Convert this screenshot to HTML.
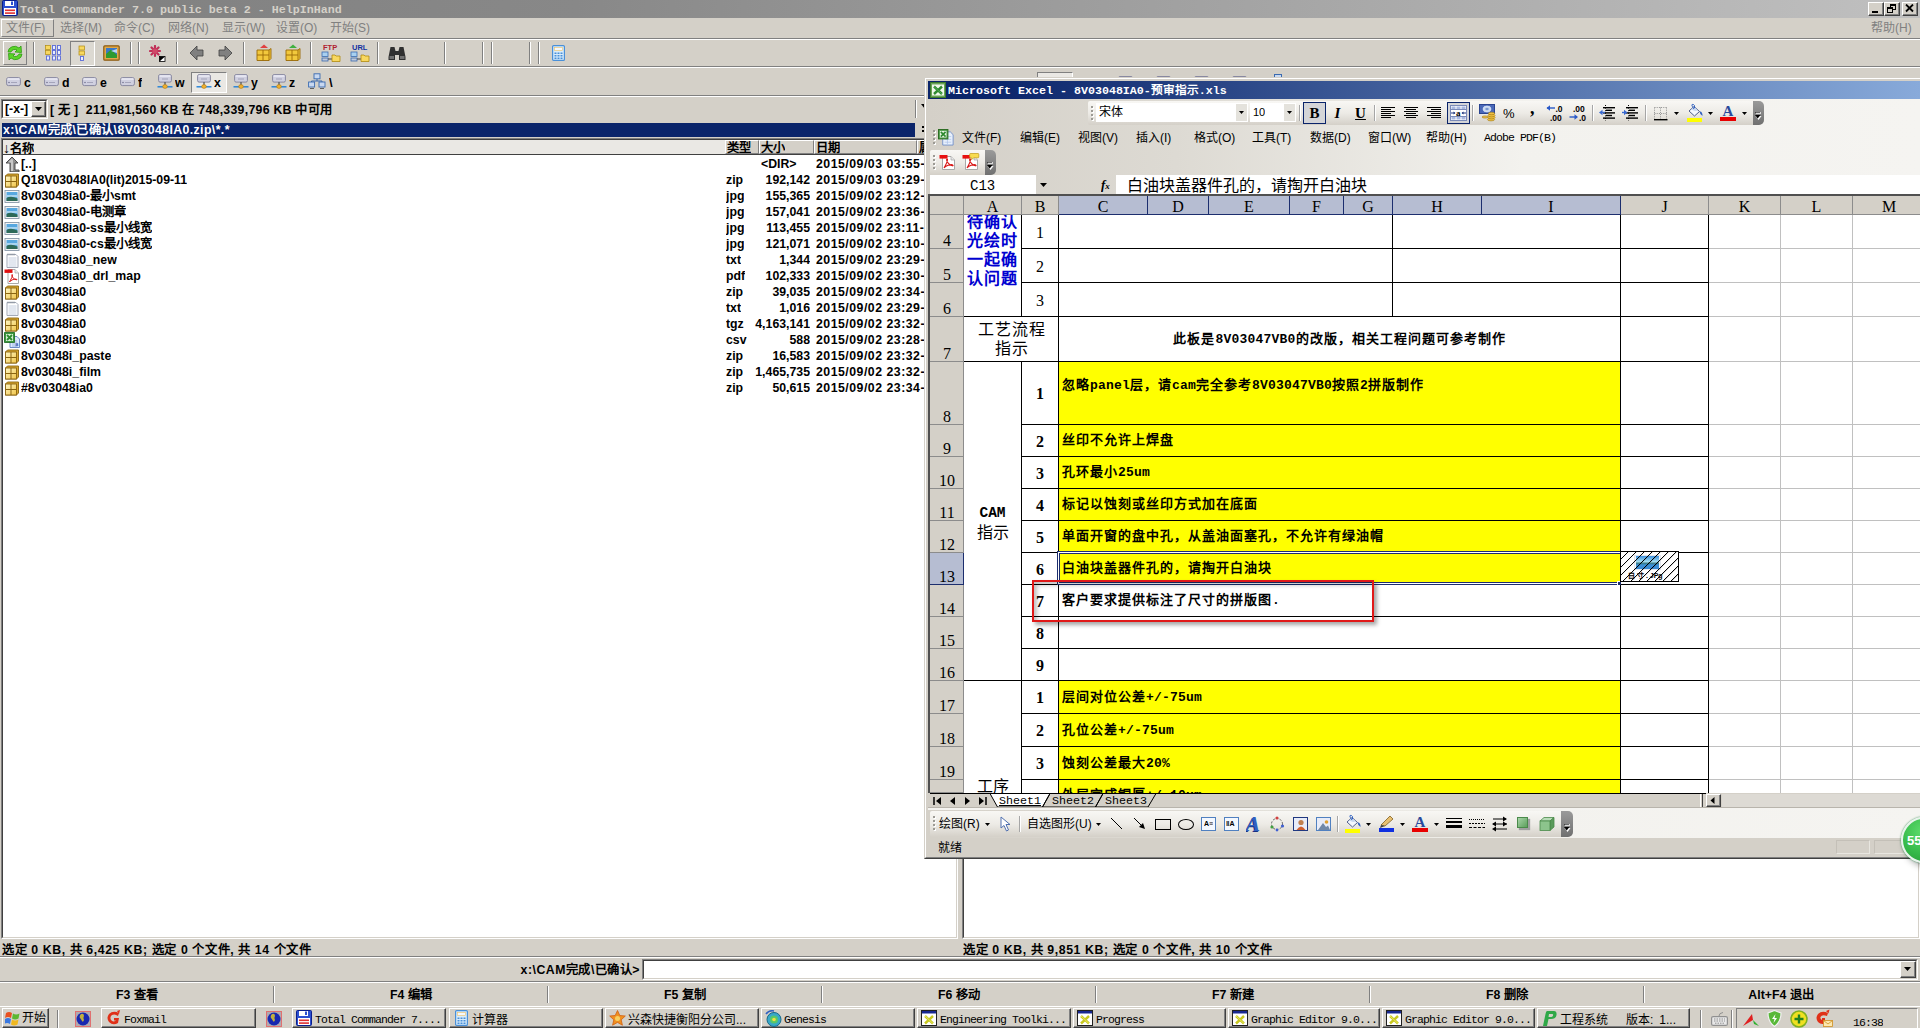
<!DOCTYPE html><html lang="zh-CN"><head><meta charset="utf-8"><title>Total Commander</title><style>
@font-face{font-family:"K";src:local("Liberation Sans Bold"),local("LiberationSans-Bold"),local("Liberation Sans");unicode-range:U+2E80-9FFF,U+FF00-FFEF;size-adjust:133.33%}
@font-face{font-family:"K";src:local("Liberation Sans Bold"),local("LiberationSans-Bold");font-weight:bold;unicode-range:U+2E80-9FFF,U+FF00-FFEF;size-adjust:133.33%}
*{box-sizing:border-box;margin:0;padding:0}
html,body{width:1920px;height:1028px;overflow:hidden}
body{background:#D4D0C8;position:relative;font-family:"K","Liberation Sans",sans-serif;font-size:12px;color:#000}
.a{position:absolute;white-space:nowrap;overflow:hidden}
.v{position:absolute;white-space:nowrap}
.ss{font-family:"K","Liberation Sans",sans-serif}
.mono{font-family:"K","Liberation Mono",monospace}
.serif{font-family:"K","Liberation Serif",serif}
.b{font-weight:bold}
.ln{position:absolute;background:#000}
.gl{position:absolute;background:#C0C0C0}
.raised{border:1px solid;border-color:#fff #808080 #808080 #fff}
.sunken{border:1px solid;border-color:#808080 #fff #fff #808080}
.tcf{font-family:"K","Liberation Sans",sans-serif;font-weight:bold;font-size:12.3px;line-height:16px}
.sep{position:absolute;width:2px;border-left:1px solid #808080;border-right:1px solid #fff}
.hl{position:absolute;height:2px;border-top:1px solid #808080;border-bottom:1px solid #fff}
.menu{position:absolute;font-size:12px;line-height:14px;white-space:nowrap}
.yl{position:absolute;background:#FFFF00}
.ct{position:absolute;white-space:nowrap;font-weight:bold;font-size:13px;letter-spacing:1px;line-height:16px}
.ct b{font-family:"Liberation Mono",monospace;letter-spacing:0.2px}
.num{position:absolute;text-align:center;font-family:"K","Liberation Serif",serif;font-size:16px;line-height:18px}
.tb{position:absolute;top:1008px;height:20px;border:1px solid;border-color:#fff #404040 #404040 #fff;box-shadow:inset -1px -1px 0 #808080;background:#D4D0C8;overflow:hidden;white-space:nowrap;font-size:12px;line-height:18px}
.tb span{position:absolute;left:22px;top:2px;font-family:"K","Liberation Mono",monospace;font-size:11.5px;letter-spacing:-0.9px}
</style></head><body>
<div class="a" style="left:0;top:0;width:1920px;height:18px;background:linear-gradient(to right,#808080 0%,#888 30%,#C0C0C0 100%)"></div>
<svg class="a" style="left:2px;top:0px" width="16" height="16" viewBox="0 0 16 16"><rect x="0.5" y="0.5" width="15" height="15" rx="1" fill="#2C4FD0" stroke="#0A1E8C"/><rect x="3" y="1" width="9" height="5" fill="#fff"/><rect x="9" y="1.5" width="2" height="3.5" fill="#2C4FD0"/><rect x="2" y="8" width="12" height="7" fill="#fff"/><rect x="3" y="9.5" width="10" height="1.6" fill="#E03030"/><rect x="3" y="12.3" width="10" height="1.6" fill="#E03030"/></svg>
<div class="a mono b" style="left:20px;top:3px;font-size:11.67px;line-height:14px;color:#D4D0C8;letter-spacing:0px">Total Commander 7.0 public beta 2 - HelpInHand</div>
<div class="a" style="left:1868px;top:2px;width:16px;height:14px;background:#D4D0C8;border:1px solid;border-color:#fff #404040 #404040 #fff;box-shadow:inset -1px -1px 0 #808080"></div><div class="ln" style="left:1872px;top:11px;width:6px;height:2px"></div><div class="a" style="left:1884px;top:2px;width:16px;height:14px;background:#D4D0C8;border:1px solid;border-color:#fff #404040 #404040 #fff;box-shadow:inset -1px -1px 0 #808080"></div><div class="a" style="left:1890px;top:4px;width:6px;height:6px;border:1px solid #000;border-top-width:2px"></div><div class="a" style="left:1887px;top:7px;width:6px;height:6px;border:1px solid #000;border-top-width:2px;background:#D4D0C8"></div><div class="a" style="left:1902px;top:2px;width:16px;height:14px;background:#D4D0C8;border:1px solid;border-color:#fff #404040 #404040 #fff;box-shadow:inset -1px -1px 0 #808080"></div><svg class="a" style="left:1905px;top:4px" width="10" height="9" viewBox="0 0 10 9"><path d="M1 0.5 L8 7.5 M8 0.5 L1 7.5" stroke="#000" stroke-width="1.8"/></svg>
<div class="a raised" style="left:1px;top:19px;width:53px;height:18px"></div>
<div class="menu" style="left:6px;top:21px;width:48px;overflow:hidden;color:#808080">文件(F)</div>
<div class="menu" style="left:60px;top:21px;width:48px;overflow:hidden;color:#808080">选择(M)</div>
<div class="menu" style="left:114px;top:21px;width:48px;overflow:hidden;color:#808080">命令(C)</div>
<div class="menu" style="left:168px;top:21px;width:48px;overflow:hidden;color:#808080">网络(N)</div>
<div class="menu" style="left:222px;top:21px;width:48px;overflow:hidden;color:#808080">显示(W)</div>
<div class="menu" style="left:276px;top:21px;width:48px;overflow:hidden;color:#808080">设置(O)</div>
<div class="menu" style="left:330px;top:21px;width:48px;overflow:hidden;color:#808080">开始(S)</div>
<div class="menu" style="left:1871px;top:21px;width:46px;overflow:hidden;color:#808080">帮助(H)</div>
<div class="hl" style="left:0;top:38px;width:1920px"></div>
<div class="hl" style="left:0;top:66px;width:1920px"></div>
<div class="hl" style="left:0;top:95px;width:1920px"></div>
<div class="sep" style="left:33px;top:42px;height:22px"></div>
<div class="sep" style="left:130px;top:42px;height:22px"></div>
<div class="sep" style="left:138px;top:42px;height:22px"></div>
<div class="sep" style="left:176px;top:42px;height:22px"></div>
<div class="sep" style="left:243px;top:42px;height:22px"></div>
<div class="sep" style="left:310px;top:42px;height:22px"></div>
<div class="sep" style="left:377px;top:42px;height:22px"></div>
<div class="sep" style="left:444px;top:42px;height:22px"></div>
<div class="sep" style="left:482px;top:42px;height:22px"></div>
<div class="sep" style="left:491px;top:42px;height:22px"></div>
<div class="sep" style="left:529px;top:42px;height:22px"></div>
<div class="sep" style="left:538px;top:42px;height:22px"></div>
<div class="a raised" style="left:3px;top:41px;width:24px;height:24px"></div>
<svg class="a" style="left:6px;top:44px" width="18" height="18" viewBox="0 0 18 18"><path d="M2 8 A6.5 6 0 0 1 13 4 L15 2 L15.5 8.5 L9 8 L11 6 A4 3.6 0 0 0 5 8 Z" fill="#5BD42A" stroke="#2E9A10" stroke-width="0.8"/><path d="M16 10 A6.5 6 0 0 1 5 14 L3 16 L2.5 9.5 L9 10 L7 12 A4 3.6 0 0 0 13 10 Z" fill="#5BD42A" stroke="#2E9A10" stroke-width="0.8"/></svg>
<svg class="a" style="left:45px;top:44px" width="18" height="18" viewBox="0 0 18 18"><g fill="#F8D860" stroke="#B08A10" stroke-width="0.7"><rect x="0.5" y="1.5" width="5" height="4"/><rect x="0.5" y="6.5" width="5" height="4"/></g><g fill="#E8EEFF" stroke="#5A6AD8" stroke-width="0.9"><rect x="1.5" y="12" width="3" height="4"/><rect x="7.5" y="1.5" width="3" height="4"/><rect x="7.5" y="6.5" width="3" height="4"/><rect x="7.5" y="12" width="3" height="4"/><rect x="12.5" y="1.5" width="3" height="4"/><rect x="12.5" y="6.5" width="3" height="4"/><rect x="12.5" y="12" width="3" height="4"/></g></svg>
<div class="a" style="left:70px;top:41px;width:25px;height:25px;border:1px solid;border-color:#808080 #fff #fff #808080;background:#DCD9D2"></div>
<svg class="a" style="left:78px;top:45px" width="9" height="18" viewBox="0 0 9 18"><g fill="#F8D860" stroke="#B08A10" stroke-width="0.7"><rect x="1" y="1" width="5.5" height="4"/><rect x="1" y="6" width="5.5" height="4"/></g><rect x="2.5" y="11.5" width="3" height="4" fill="#E8EEFF" stroke="#5A6AD8" stroke-width="0.9"/></svg>
<svg class="a" style="left:103px;top:45px" width="17" height="16" viewBox="0 0 17 16"><rect x="0.8" y="0.8" width="15.4" height="14.4" rx="1" fill="#E0A848" stroke="#8A5A10" stroke-width="1.2"/><rect x="3" y="3" width="11" height="10" fill="#3A78C8"/><path d="M3 13 L3 9 L8 4.5 L14 10 L14 13 Z" fill="#2E9A30"/><path d="M8 6 L14 4 L14 8 Z" fill="#BCD8F0"/></svg>
<svg class="a" style="left:149px;top:45px" width="18" height="18" viewBox="0 0 18 18"><g stroke="#C03058" stroke-width="2.2" stroke-linecap="round"><path d="M6 1 L6 11 M1 6 L11 6 M2.5 2.5 L9.5 9.5 M9.5 2.5 L2.5 9.5"/></g><circle cx="6" cy="6" r="2.6" fill="#D04868"/><rect x="10.5" y="11.5" width="5.5" height="5" fill="#fff" stroke="#000" stroke-width="0.8"/><path d="M10.5 16.5 L10.5 11.5 L16 11.5 Z" fill="#000"/></svg>
<svg class="a" style="left:189px;top:45px" width="16" height="16" viewBox="0 0 16 16"><path d="M1 8 L8 1 L8 5 L14 5 L14 11 L8 11 L8 15 Z" fill="#808080" stroke="#404040" stroke-width="0.8"/></svg>
<svg class="a" style="left:217px;top:45px" width="16" height="16" viewBox="0 0 16 16"><path d="M15 8 L8 1 L8 5 L2 5 L2 11 L8 11 L8 15 Z" fill="#808080" stroke="#404040" stroke-width="0.8"/></svg>
<svg class="a" style="left:255px;top:44px" width="18" height="18" viewBox="0 0 18 18"><path d="M5 4 L9 0.5 L13 4 Z" fill="#E04040"/><path d="M2 6 L14 6 L16 4.5 L16 14.5 L14 16.5 L2 16.5 Z" fill="#F2C83C" stroke="#9A6A08" stroke-width="0.9"/><path d="M2 11 L14 11 M8 6 L8 16.5 M14 6 L14 16.5" stroke="#9A6A08" stroke-width="0.9" fill="none"/></svg><svg class="a" style="left:284px;top:44px" width="18" height="18" viewBox="0 0 18 18"><path d="M5 4 L9 0.5 L13 4 Z" fill="#40B040"/><path d="M2 6 L14 6 L16 4.5 L16 14.5 L14 16.5 L2 16.5 Z" fill="#F2C83C" stroke="#9A6A08" stroke-width="0.9"/><path d="M2 11 L14 11 M8 6 L8 16.5 M14 6 L14 16.5" stroke="#9A6A08" stroke-width="0.9" fill="none"/></svg>
<svg class="a" style="left:321px;top:43px" width="20" height="20" viewBox="0 0 20 20"><text x="2" y="7" font-family="Liberation Sans" font-weight="bold" font-size="7.5" fill="#B02030">FTP</text><rect x="1" y="9" width="6" height="4.5" fill="#A8D0F0" stroke="#3A6AB0" stroke-width="0.8"/><rect x="1" y="15" width="6" height="3" fill="#C0C8D8" stroke="#3A6AB0" stroke-width="0.8"/><path d="M7 16 L12 16" stroke="#404040"/><path d="M11 12 L14 12 L15 13 L19 13 L19 18.5 L11 18.5 Z" fill="#F8D860" stroke="#B08A10" stroke-width="0.8"/></svg><svg class="a" style="left:350px;top:43px" width="20" height="20" viewBox="0 0 20 20"><text x="2" y="7" font-family="Liberation Sans" font-weight="bold" font-size="7.5" fill="#1030A0">URL</text><rect x="1" y="9" width="6" height="4.5" fill="#A8D0F0" stroke="#3A6AB0" stroke-width="0.8"/><rect x="1" y="15" width="6" height="3" fill="#C0C8D8" stroke="#3A6AB0" stroke-width="0.8"/><path d="M7 16 L12 16" stroke="#404040"/><path d="M11 12 L14 12 L15 13 L19 13 L19 18.5 L11 18.5 Z" fill="#F8D860" stroke="#B08A10" stroke-width="0.8"/></svg>
<svg class="a" style="left:388px;top:45px" width="18" height="16" viewBox="0 0 18 16"><path d="M2.5 2 L6.5 2 L7.5 6 L10.5 6 L11.5 2 L15.5 2 L17.5 12 L17.5 15 L11 15 L11 10 L7 10 L7 15 L0.5 15 L0.5 12 Z" fill="#303030"/><rect x="1.5" y="11" width="4.5" height="3" fill="#707070"/><rect x="12" y="11" width="4.5" height="3" fill="#707070"/></svg>
<svg class="a" style="left:552px;top:45px" width="13" height="16" viewBox="0 0 13 16"><rect x="0.6" y="0.6" width="11.8" height="14.8" rx="1" fill="#D8ECFC" stroke="#4A90D8" stroke-width="1.2"/><rect x="2.5" y="2.5" width="8" height="3" fill="#F4F8FC" stroke="#F0C060" stroke-width="0.6"/><g fill="#4A90D8"><rect x="2.5" y="7.5" width="2" height="1.5"/><rect x="5.5" y="7.5" width="2" height="1.5"/><rect x="8.5" y="7.5" width="2" height="1.5"/><rect x="2.5" y="10" width="2" height="1.5"/><rect x="5.5" y="10" width="2" height="1.5"/><rect x="8.5" y="10" width="2" height="1.5"/><rect x="2.5" y="12.5" width="2" height="1.5"/><rect x="5.5" y="12.5" width="2" height="1.5"/><rect x="8.5" y="12.5" width="2" height="1.5"/></g></svg>
<svg class="a" style="left:6px;top:77px" width="15" height="10" viewBox="0 0 15 10"><rect x="0.6" y="0.6" width="13.8" height="8" rx="1.8" fill="#D0D0E0" stroke="#8888A0" stroke-width="1"/><path d="M1.5 2 L13.5 2" stroke="#F4F4FC" stroke-width="1.2"/><path d="M5 5.5 L11 5.5" stroke="#9898B0" stroke-width="0.8"/><circle cx="3" cy="5.5" r="0.7" fill="#606080"/></svg><div class="a tcf" style="left:24px;top:75px">c</div>
<svg class="a" style="left:44px;top:77px" width="15" height="10" viewBox="0 0 15 10"><rect x="0.6" y="0.6" width="13.8" height="8" rx="1.8" fill="#D0D0E0" stroke="#8888A0" stroke-width="1"/><path d="M1.5 2 L13.5 2" stroke="#F4F4FC" stroke-width="1.2"/><path d="M5 5.5 L11 5.5" stroke="#9898B0" stroke-width="0.8"/><circle cx="3" cy="5.5" r="0.7" fill="#606080"/></svg><div class="a tcf" style="left:62px;top:75px">d</div>
<svg class="a" style="left:82px;top:77px" width="15" height="10" viewBox="0 0 15 10"><rect x="0.6" y="0.6" width="13.8" height="8" rx="1.8" fill="#D0D0E0" stroke="#8888A0" stroke-width="1"/><path d="M1.5 2 L13.5 2" stroke="#F4F4FC" stroke-width="1.2"/><path d="M5 5.5 L11 5.5" stroke="#9898B0" stroke-width="0.8"/><circle cx="3" cy="5.5" r="0.7" fill="#606080"/></svg><div class="a tcf" style="left:100px;top:75px">e</div>
<svg class="a" style="left:120px;top:77px" width="15" height="10" viewBox="0 0 15 10"><rect x="0.6" y="0.6" width="13.8" height="8" rx="1.8" fill="#D0D0E0" stroke="#8888A0" stroke-width="1"/><path d="M1.5 2 L13.5 2" stroke="#F4F4FC" stroke-width="1.2"/><path d="M5 5.5 L11 5.5" stroke="#9898B0" stroke-width="0.8"/><circle cx="3" cy="5.5" r="0.7" fill="#606080"/></svg><div class="a tcf" style="left:138px;top:75px">f</div>
<div class="a" style="left:191px;top:72px;width:36px;height:21px;border:1px solid;border-color:#808080 #fff #fff #808080;background:#EAE8E4"></div>
<svg class="a" style="left:157px;top:74px" width="16" height="16" viewBox="0 0 16 16"><rect x="1.6" y="0.6" width="12.8" height="7.5" rx="1.5" fill="#D0D0E0" stroke="#8888A0" stroke-width="1"/><path d="M2.5 2 L13.5 2" stroke="#F4F4FC" stroke-width="1.2"/><path d="M5 5 L11 5" stroke="#9898B0" stroke-width="0.8"/><path d="M8 8 L8 12" stroke="#606060" stroke-width="1.4"/><path d="M0.5 12.8 L15.5 12.8" stroke="#2080D8" stroke-width="1.4"/><ellipse cx="8" cy="12.5" rx="2.3" ry="1.9" fill="#F0B030" stroke="#B07810" stroke-width="0.6"/></svg><div class="a tcf" style="left:175px;top:75px">w</div>
<svg class="a" style="left:196px;top:74px" width="16" height="16" viewBox="0 0 16 16"><rect x="1.6" y="0.6" width="12.8" height="7.5" rx="1.5" fill="#D0D0E0" stroke="#8888A0" stroke-width="1"/><path d="M2.5 2 L13.5 2" stroke="#F4F4FC" stroke-width="1.2"/><path d="M5 5 L11 5" stroke="#9898B0" stroke-width="0.8"/><path d="M8 8 L8 12" stroke="#606060" stroke-width="1.4"/><path d="M0.5 12.8 L15.5 12.8" stroke="#2080D8" stroke-width="1.4"/><ellipse cx="8" cy="12.5" rx="2.3" ry="1.9" fill="#F0B030" stroke="#B07810" stroke-width="0.6"/></svg><div class="a tcf" style="left:214px;top:75px">x</div>
<svg class="a" style="left:233px;top:74px" width="16" height="16" viewBox="0 0 16 16"><rect x="1.6" y="0.6" width="12.8" height="7.5" rx="1.5" fill="#D0D0E0" stroke="#8888A0" stroke-width="1"/><path d="M2.5 2 L13.5 2" stroke="#F4F4FC" stroke-width="1.2"/><path d="M5 5 L11 5" stroke="#9898B0" stroke-width="0.8"/><path d="M8 8 L8 12" stroke="#606060" stroke-width="1.4"/><path d="M0.5 12.8 L15.5 12.8" stroke="#2080D8" stroke-width="1.4"/><ellipse cx="8" cy="12.5" rx="2.3" ry="1.9" fill="#F0B030" stroke="#B07810" stroke-width="0.6"/></svg><div class="a tcf" style="left:251px;top:75px">y</div>
<svg class="a" style="left:271px;top:74px" width="16" height="16" viewBox="0 0 16 16"><rect x="1.6" y="0.6" width="12.8" height="7.5" rx="1.5" fill="#D0D0E0" stroke="#8888A0" stroke-width="1"/><path d="M2.5 2 L13.5 2" stroke="#F4F4FC" stroke-width="1.2"/><path d="M5 5 L11 5" stroke="#9898B0" stroke-width="0.8"/><path d="M8 8 L8 12" stroke="#606060" stroke-width="1.4"/><path d="M0.5 12.8 L15.5 12.8" stroke="#2080D8" stroke-width="1.4"/><ellipse cx="8" cy="12.5" rx="2.3" ry="1.9" fill="#F0B030" stroke="#B07810" stroke-width="0.6"/></svg><div class="a tcf" style="left:289px;top:75px">z</div>
<svg class="a" style="left:308px;top:73px" width="18" height="17" viewBox="0 0 18 17"><g fill="#C8D8F0" stroke="#3A6AB0" stroke-width="0.9"><rect x="6" y="0.8" width="6" height="5"/><rect x="0.6" y="9" width="6" height="5"/><rect x="11" y="9" width="6" height="5"/></g><path d="M9 6 L9 8 M3.5 8 L14 8 M3.5 8 L3.5 9 M14 8 L14 9" stroke="#3A6AB0" fill="none"/><path d="M2 15.5 L6 15.5 M12 15.5 L16 15.5" stroke="#606060"/></svg>
<div class="a tcf" style="left:329px;top:75px;font-size:13px">\</div>
<div class="a" style="left:1px;top:99px;width:47px;height:20px;border:1px solid;border-color:#808080 #fff #fff #808080;background:#fff"><div class="a" style="left:0;top:0;width:45px;height:18px;border:1px solid;border-color:#404040 #D4D0C8 #D4D0C8 #404040"></div></div>
<div class="a tcf" style="left:5px;top:101px">[-x-]</div>
<div class="a" style="left:31px;top:101px;width:15px;height:16px;background:#D4D0C8;border:1px solid;border-color:#fff #404040 #404040 #fff;box-shadow:inset -1px -1px 0 #808080"></div>
<svg class="a" style="left:35px;top:107px" width="7" height="4" viewBox="0 0 7 4"><path d="M0 0 L7 0 L3.5 4 Z" fill="#000"/></svg>
<div class="a tcf" style="left:50px;top:102px;letter-spacing:0.28px">[ 无 ]&nbsp;&nbsp;211,981,560 KB 在 748,339,796 KB 中可用</div>
<div class="a" style="left:2px;top:123px;width:913px;height:14px;background:#0A246A"></div>
<div class="sep" style="left:915px;top:100px;height:18px"></div>
<svg class="a" style="left:921px;top:104px" width="4" height="5" viewBox="0 0 4 5"><path d="M0 0 L4 0 L4 5 Z" fill="#000"/></svg>
<div class="a" style="left:922px;top:126px;width:2px;height:2px;background:#000"></div><div class="a" style="left:922px;top:130px;width:2px;height:2px;background:#000"></div>
<div class="a tcf" style="left:3px;top:123px;height:14px;line-height:14px;color:#fff;letter-spacing:0.4px">x:\CAM完成\已确认\8V03048IA0.zip\*.*</div>
<div class="a" style="left:1px;top:138px;width:957px;height:801px;border:1px solid;border-color:#808080 #fff #fff #808080;background:#fff"><div class="a" style="left:0;top:0;width:955px;height:799px;border:1px solid;border-color:#404040 #D4D0C8 #D4D0C8 #404040"></div></div>
<div class="a" style="left:3px;top:140px;width:955px;height:15px;background:#EAE8E4;border-bottom:1px solid #404040"></div>
<div class="a" style="left:725px;top:140px;width:34px;height:14px;background:#D4D0C8;border:1px solid;border-color:#fff #808080 #808080 #fff"></div>
<div class="a tcf" style="left:727px;top:140px">类型</div>
<div class="a" style="left:759px;top:140px;width:55px;height:14px;background:#D4D0C8;border:1px solid;border-color:#fff #808080 #808080 #fff"></div>
<div class="a tcf" style="left:761px;top:140px">大小</div>
<div class="a" style="left:814px;top:140px;width:103px;height:14px;background:#D4D0C8;border:1px solid;border-color:#fff #808080 #808080 #fff"></div>
<div class="a tcf" style="left:816px;top:140px">日期</div>
<div class="a" style="left:917px;top:140px;width:60px;height:14px;background:#D4D0C8;border:1px solid;border-color:#fff #808080 #808080 #fff"></div>
<div class="a tcf" style="left:919px;top:140px">属性</div>
<div class="a tcf" style="left:3px;top:141px"><span style="font-size:14px;line-height:14px">↓</span>名称</div>
<svg class="a" style="left:4px;top:156px" width="16" height="16" viewBox="0 0 16 16"><path d="M8 1 L14 7 L11 7 L11 14 L15 14 L15 16 L6 16 L6 7 L2 7 Z" fill="#909090" stroke="#404040" stroke-width="0.9"/><path d="M8 2.5 L4 6.5 L7 6.5 L7 15 L9 15 L9 4 Z" fill="#C8C8C8"/></svg>
<div class="a tcf" style="left:21px;top:156px">[..]</div>
<div class="a tcf" style="left:761px;top:156px">&lt;DIR&gt;</div>
<div class="a tcf" style="left:816px;top:156px;width:108px;letter-spacing:0.5px">2015/09/03 03:55-</div>
<svg class="a" style="left:4px;top:172px" width="16" height="16" viewBox="0 0 16 16"><defs><linearGradient id="zg" x1="0" y1="0" x2="1" y2="1"><stop offset="0" stop-color="#FFF8C8"/><stop offset="1" stop-color="#F0C448"/></linearGradient></defs><path d="M1.5 4 L3.5 2 L14.5 2 L14.5 13 L12.5 15 L1.5 15 Z" fill="#D8A830" stroke="#8A6410" stroke-width="0.9"/><rect x="1.5" y="4" width="11" height="11" fill="url(#zg)" stroke="#8A6410" stroke-width="0.9"/><path d="M1.5 9.5 L12.5 9.5 M7 4 L7 15" stroke="#8A6410" stroke-width="1" fill="none"/></svg>
<div class="a tcf" style="left:21px;top:172px">Q18V03048IA0(lit)2015-09-11</div>
<div class="a tcf" style="left:726px;top:172px">zip</div>
<div class="a tcf" style="left:740px;top:172px;width:70px;text-align:right">192,142</div>
<div class="a tcf" style="left:816px;top:172px;width:108px;letter-spacing:0.5px">2015/09/03 03:29-</div>
<svg class="a" style="left:4px;top:188px" width="16" height="16" viewBox="0 0 16 16"><rect x="1" y="2.5" width="14" height="12" fill="#F4F4F4" stroke="#8898A8" stroke-width="0.9"/><rect x="2.5" y="4" width="11" height="9" fill="#58A8E0"/><path d="M2.5 7 L13.5 7 L13.5 9 L2.5 9 Z" fill="#A8D4F0"/><path d="M2.5 13 L2.5 10 Q7 7.5 13.5 10.5 L13.5 13 Z" fill="#2E6A58"/></svg>
<div class="a tcf" style="left:21px;top:188px">8v03048ia0-最小smt</div>
<div class="a tcf" style="left:726px;top:188px">jpg</div>
<div class="a tcf" style="left:740px;top:188px;width:70px;text-align:right">155,365</div>
<div class="a tcf" style="left:816px;top:188px;width:108px;letter-spacing:0.5px">2015/09/02 23:12-</div>
<svg class="a" style="left:4px;top:204px" width="16" height="16" viewBox="0 0 16 16"><rect x="1" y="2.5" width="14" height="12" fill="#F4F4F4" stroke="#8898A8" stroke-width="0.9"/><rect x="2.5" y="4" width="11" height="9" fill="#58A8E0"/><path d="M2.5 7 L13.5 7 L13.5 9 L2.5 9 Z" fill="#A8D4F0"/><path d="M2.5 13 L2.5 10 Q7 7.5 13.5 10.5 L13.5 13 Z" fill="#2E6A58"/></svg>
<div class="a tcf" style="left:21px;top:204px">8v03048ia0-电测章</div>
<div class="a tcf" style="left:726px;top:204px">jpg</div>
<div class="a tcf" style="left:740px;top:204px;width:70px;text-align:right">157,041</div>
<div class="a tcf" style="left:816px;top:204px;width:108px;letter-spacing:0.5px">2015/09/02 23:36-</div>
<svg class="a" style="left:4px;top:220px" width="16" height="16" viewBox="0 0 16 16"><rect x="1" y="2.5" width="14" height="12" fill="#F4F4F4" stroke="#8898A8" stroke-width="0.9"/><rect x="2.5" y="4" width="11" height="9" fill="#58A8E0"/><path d="M2.5 7 L13.5 7 L13.5 9 L2.5 9 Z" fill="#A8D4F0"/><path d="M2.5 13 L2.5 10 Q7 7.5 13.5 10.5 L13.5 13 Z" fill="#2E6A58"/></svg>
<div class="a tcf" style="left:21px;top:220px">8v03048ia0-ss最小线宽</div>
<div class="a tcf" style="left:726px;top:220px">jpg</div>
<div class="a tcf" style="left:740px;top:220px;width:70px;text-align:right">113,455</div>
<div class="a tcf" style="left:816px;top:220px;width:108px;letter-spacing:0.5px">2015/09/02 23:11-</div>
<svg class="a" style="left:4px;top:236px" width="16" height="16" viewBox="0 0 16 16"><rect x="1" y="2.5" width="14" height="12" fill="#F4F4F4" stroke="#8898A8" stroke-width="0.9"/><rect x="2.5" y="4" width="11" height="9" fill="#58A8E0"/><path d="M2.5 7 L13.5 7 L13.5 9 L2.5 9 Z" fill="#A8D4F0"/><path d="M2.5 13 L2.5 10 Q7 7.5 13.5 10.5 L13.5 13 Z" fill="#2E6A58"/></svg>
<div class="a tcf" style="left:21px;top:236px">8v03048ia0-cs最小线宽</div>
<div class="a tcf" style="left:726px;top:236px">jpg</div>
<div class="a tcf" style="left:740px;top:236px;width:70px;text-align:right">121,071</div>
<div class="a tcf" style="left:816px;top:236px;width:108px;letter-spacing:0.5px">2015/09/02 23:10-</div>
<svg class="a" style="left:4px;top:252px" width="16" height="16" viewBox="0 0 16 16"><path d="M3 2.5 L12 2.5 L14 4.5 L14 15.5 L3 15.5 Z" fill="#fff" stroke="#98A0B0" stroke-width="0.9"/><path d="M4 1.5 L4 3.5 M6 1.5 L6 3.5 M8 1.5 L8 3.5 M10 1.5 L10 3.5" stroke="#808890" stroke-width="0.8"/><path d="M4.5 6 L12.5 6 M4.5 8 L12.5 8 M4.5 10 L12.5 10 M4.5 12 L12.5 12 M4.5 14 L12.5 14" stroke="#B8C4D8" stroke-width="0.8"/></svg>
<div class="a tcf" style="left:21px;top:252px">8v03048ia0_new</div>
<div class="a tcf" style="left:726px;top:252px">txt</div>
<div class="a tcf" style="left:740px;top:252px;width:70px;text-align:right">1,344</div>
<div class="a tcf" style="left:816px;top:252px;width:108px;letter-spacing:0.5px">2015/09/02 23:29-</div>
<svg class="a" style="left:4px;top:268px" width="16" height="16" viewBox="0 0 16 16"><path d="M4 1.5 L11 1.5 L14.5 5 L14.5 15.5 L4 15.5 Z" fill="#fff" stroke="#A0A0A0" stroke-width="0.9"/><path d="M11 1.5 L11 5 L14.5 5" fill="#E8E8E8" stroke="#A0A0A0" stroke-width="0.7"/><rect x="0.5" y="1.5" width="8" height="3.4" fill="#E01010"/><path d="M5.5 14 Q8.5 9 8.5 6.8 Q8.2 6 7.8 6.9 Q7.8 9 10.5 11.2 Q13.5 12.5 13 11.5 Q12 10.5 9 11.5 Q6.5 12.5 5.5 14 Z" fill="none" stroke="#D81818" stroke-width="1"/></svg>
<div class="a tcf" style="left:21px;top:268px">8v03048ia0_drl_map</div>
<div class="a tcf" style="left:726px;top:268px">pdf</div>
<div class="a tcf" style="left:740px;top:268px;width:70px;text-align:right">102,333</div>
<div class="a tcf" style="left:816px;top:268px;width:108px;letter-spacing:0.5px">2015/09/02 23:30-</div>
<svg class="a" style="left:4px;top:284px" width="16" height="16" viewBox="0 0 16 16"><defs><linearGradient id="zg" x1="0" y1="0" x2="1" y2="1"><stop offset="0" stop-color="#FFF8C8"/><stop offset="1" stop-color="#F0C448"/></linearGradient></defs><path d="M1.5 4 L3.5 2 L14.5 2 L14.5 13 L12.5 15 L1.5 15 Z" fill="#D8A830" stroke="#8A6410" stroke-width="0.9"/><rect x="1.5" y="4" width="11" height="11" fill="url(#zg)" stroke="#8A6410" stroke-width="0.9"/><path d="M1.5 9.5 L12.5 9.5 M7 4 L7 15" stroke="#8A6410" stroke-width="1" fill="none"/></svg>
<div class="a tcf" style="left:21px;top:284px">8v03048ia0</div>
<div class="a tcf" style="left:726px;top:284px">zip</div>
<div class="a tcf" style="left:740px;top:284px;width:70px;text-align:right">39,035</div>
<div class="a tcf" style="left:816px;top:284px;width:108px;letter-spacing:0.5px">2015/09/02 23:34-</div>
<svg class="a" style="left:4px;top:300px" width="16" height="16" viewBox="0 0 16 16"><path d="M3 2.5 L12 2.5 L14 4.5 L14 15.5 L3 15.5 Z" fill="#fff" stroke="#98A0B0" stroke-width="0.9"/><path d="M4 1.5 L4 3.5 M6 1.5 L6 3.5 M8 1.5 L8 3.5 M10 1.5 L10 3.5" stroke="#808890" stroke-width="0.8"/><path d="M4.5 6 L12.5 6 M4.5 8 L12.5 8 M4.5 10 L12.5 10 M4.5 12 L12.5 12 M4.5 14 L12.5 14" stroke="#B8C4D8" stroke-width="0.8"/></svg>
<div class="a tcf" style="left:21px;top:300px">8v03048ia0</div>
<div class="a tcf" style="left:726px;top:300px">txt</div>
<div class="a tcf" style="left:740px;top:300px;width:70px;text-align:right">1,016</div>
<div class="a tcf" style="left:816px;top:300px;width:108px;letter-spacing:0.5px">2015/09/02 23:29-</div>
<svg class="a" style="left:4px;top:316px" width="16" height="16" viewBox="0 0 16 16"><defs><linearGradient id="zg" x1="0" y1="0" x2="1" y2="1"><stop offset="0" stop-color="#FFF8C8"/><stop offset="1" stop-color="#F0C448"/></linearGradient></defs><path d="M1.5 4 L3.5 2 L14.5 2 L14.5 13 L12.5 15 L1.5 15 Z" fill="#D8A830" stroke="#8A6410" stroke-width="0.9"/><rect x="1.5" y="4" width="11" height="11" fill="url(#zg)" stroke="#8A6410" stroke-width="0.9"/><path d="M1.5 9.5 L12.5 9.5 M7 4 L7 15" stroke="#8A6410" stroke-width="1" fill="none"/></svg>
<div class="a tcf" style="left:21px;top:316px">8v03048ia0</div>
<div class="a tcf" style="left:726px;top:316px">tgz</div>
<div class="a tcf" style="left:740px;top:316px;width:70px;text-align:right">4,163,141</div>
<div class="a tcf" style="left:816px;top:316px;width:108px;letter-spacing:0.5px">2015/09/02 23:32-</div>
<svg class="a" style="left:4px;top:332px" width="16" height="16" viewBox="0 0 16 16"><path d="M6 4.5 L13 4.5 L15.5 7 L15.5 15.5 L6 15.5 Z" fill="#DCE8FC" stroke="#6080C0" stroke-width="0.9"/><path d="M8 12 L14 12 M8 14 L14 14 M12 8 L12 15" stroke="#88A8E0" stroke-width="0.7"/><text x="11.5" y="14" font-family="Liberation Sans" font-size="5" fill="#2040A0">a</text><rect x="0.6" y="0.6" width="9.8" height="9.8" fill="#3E9A40" stroke="#1E6A20" stroke-width="0.9"/><rect x="2" y="2" width="7" height="7" fill="#D8F0D4"/><path d="M3 3 L8 8 M8 3 L3 8" stroke="#2E8A30" stroke-width="1.8"/></svg>
<div class="a tcf" style="left:21px;top:332px">8v03048ia0</div>
<div class="a tcf" style="left:726px;top:332px">csv</div>
<div class="a tcf" style="left:740px;top:332px;width:70px;text-align:right">588</div>
<div class="a tcf" style="left:816px;top:332px;width:108px;letter-spacing:0.5px">2015/09/02 23:28-</div>
<svg class="a" style="left:4px;top:348px" width="16" height="16" viewBox="0 0 16 16"><defs><linearGradient id="zg" x1="0" y1="0" x2="1" y2="1"><stop offset="0" stop-color="#FFF8C8"/><stop offset="1" stop-color="#F0C448"/></linearGradient></defs><path d="M1.5 4 L3.5 2 L14.5 2 L14.5 13 L12.5 15 L1.5 15 Z" fill="#D8A830" stroke="#8A6410" stroke-width="0.9"/><rect x="1.5" y="4" width="11" height="11" fill="url(#zg)" stroke="#8A6410" stroke-width="0.9"/><path d="M1.5 9.5 L12.5 9.5 M7 4 L7 15" stroke="#8A6410" stroke-width="1" fill="none"/></svg>
<div class="a tcf" style="left:21px;top:348px">8v03048i_paste</div>
<div class="a tcf" style="left:726px;top:348px">zip</div>
<div class="a tcf" style="left:740px;top:348px;width:70px;text-align:right">16,583</div>
<div class="a tcf" style="left:816px;top:348px;width:108px;letter-spacing:0.5px">2015/09/02 23:32-</div>
<svg class="a" style="left:4px;top:364px" width="16" height="16" viewBox="0 0 16 16"><defs><linearGradient id="zg" x1="0" y1="0" x2="1" y2="1"><stop offset="0" stop-color="#FFF8C8"/><stop offset="1" stop-color="#F0C448"/></linearGradient></defs><path d="M1.5 4 L3.5 2 L14.5 2 L14.5 13 L12.5 15 L1.5 15 Z" fill="#D8A830" stroke="#8A6410" stroke-width="0.9"/><rect x="1.5" y="4" width="11" height="11" fill="url(#zg)" stroke="#8A6410" stroke-width="0.9"/><path d="M1.5 9.5 L12.5 9.5 M7 4 L7 15" stroke="#8A6410" stroke-width="1" fill="none"/></svg>
<div class="a tcf" style="left:21px;top:364px">8v03048i_film</div>
<div class="a tcf" style="left:726px;top:364px">zip</div>
<div class="a tcf" style="left:740px;top:364px;width:70px;text-align:right">1,465,735</div>
<div class="a tcf" style="left:816px;top:364px;width:108px;letter-spacing:0.5px">2015/09/02 23:32-</div>
<svg class="a" style="left:4px;top:380px" width="16" height="16" viewBox="0 0 16 16"><defs><linearGradient id="zg" x1="0" y1="0" x2="1" y2="1"><stop offset="0" stop-color="#FFF8C8"/><stop offset="1" stop-color="#F0C448"/></linearGradient></defs><path d="M1.5 4 L3.5 2 L14.5 2 L14.5 13 L12.5 15 L1.5 15 Z" fill="#D8A830" stroke="#8A6410" stroke-width="0.9"/><rect x="1.5" y="4" width="11" height="11" fill="url(#zg)" stroke="#8A6410" stroke-width="0.9"/><path d="M1.5 9.5 L12.5 9.5 M7 4 L7 15" stroke="#8A6410" stroke-width="1" fill="none"/></svg>
<div class="a tcf" style="left:21px;top:380px">#8v03048ia0</div>
<div class="a tcf" style="left:726px;top:380px">zip</div>
<div class="a tcf" style="left:740px;top:380px;width:70px;text-align:right">50,615</div>
<div class="a tcf" style="left:816px;top:380px;width:108px;letter-spacing:0.5px">2015/09/02 23:34-</div>
<div class="a" style="left:962px;top:138px;width:958px;height:801px;border:1px solid;border-color:#808080 #fff #fff #808080;background:#fff"><div class="a" style="left:0;top:0;width:956px;height:799px;border:1px solid;border-color:#404040 #D4D0C8 #D4D0C8 #404040"></div></div>
<div class="a tcf" style="left:2px;top:942px;letter-spacing:0.6px">选定 0 KB, 共 6,425 KB; 选定 0 个文件, 共 14 个文件</div>
<div class="a tcf" style="left:963px;top:942px;letter-spacing:0.6px">选定 0 KB, 共 9,851 KB; 选定 0 个文件, 共 10 个文件</div>
<div class="hl" style="left:0;top:956px;width:1920px"></div>
<div class="a tcf" style="left:440px;top:962px;width:200px;text-align:right;letter-spacing:0.5px">x:\CAM完成\已确认&gt;</div>
<div class="a" style="left:642px;top:959px;width:1276px;height:21px;border:1px solid;border-color:#808080 #fff #fff #808080;background:#fff"><div class="a" style="left:0;top:0;width:1274px;height:19px;border:1px solid;border-color:#404040 #D4D0C8 #D4D0C8 #404040"></div></div>
<div class="a" style="left:1900px;top:961px;width:16px;height:17px;background:#D4D0C8;border:1px solid;border-color:#fff #404040 #404040 #fff;box-shadow:inset -1px -1px 0 #808080"></div>
<svg class="a" style="left:1904px;top:967px" width="7" height="4" viewBox="0 0 7 4"><path d="M0 0 L7 0 L3.5 4 Z" fill="#000"/></svg>
<div class="hl" style="left:0;top:981px;width:1920px"></div>
<div class="a tcf" style="left:0px;top:987px;width:274px;text-align:center">F3 查看</div>
<div class="a tcf" style="left:274px;top:987px;width:274px;text-align:center">F4 编辑</div>
<div class="sep" style="left:273px;top:986px;height:17px"></div>
<div class="a tcf" style="left:548px;top:987px;width:274px;text-align:center">F5 复制</div>
<div class="sep" style="left:547px;top:986px;height:17px"></div>
<div class="a tcf" style="left:822px;top:987px;width:274px;text-align:center">F6 移动</div>
<div class="sep" style="left:821px;top:986px;height:17px"></div>
<div class="a tcf" style="left:1096px;top:987px;width:274px;text-align:center">F7 新建</div>
<div class="sep" style="left:1095px;top:986px;height:17px"></div>
<div class="a tcf" style="left:1370px;top:987px;width:274px;text-align:center">F8 删除</div>
<div class="sep" style="left:1369px;top:986px;height:17px"></div>
<div class="a tcf" style="left:1644px;top:987px;width:274px;text-align:center">Alt+F4 退出</div>
<div class="sep" style="left:1643px;top:986px;height:17px"></div>
<div class="a" style="left:1037px;top:72px;width:36px;height:21px;border:1px solid;border-color:#808080 #fff #fff #808080;background:#EAE8E4"></div>
<div class="a" style="left:1118px;top:76px;width:15px;height:6px;border:1px solid #8888A0;border-radius:2px;background:#D0D0E0"></div>
<div class="a" style="left:1156px;top:76px;width:15px;height:6px;border:1px solid #8888A0;border-radius:2px;background:#D0D0E0"></div>
<div class="a" style="left:1194px;top:76px;width:15px;height:6px;border:1px solid #8888A0;border-radius:2px;background:#D0D0E0"></div>
<div class="a" style="left:1232px;top:76px;width:15px;height:6px;border:1px solid #8888A0;border-radius:2px;background:#D0D0E0"></div>
<div class="a" style="left:1274px;top:74px;width:8px;height:6px;border:1px solid #3A6AB0;background:#C8D8F0"></div>
<div class="a" style="left:924px;top:77px;width:1000px;height:782px;background:#D4D0C8;border:1px solid;border-color:#D4D0C8 #404040 #404040 #D4D0C8"><div class="a" style="left:0;top:0;width:998px;height:780px;border:1px solid;border-color:#fff #808080 #808080 #fff"></div></div>
<div class="a" style="left:928px;top:99px;width:992px;height:96px;background:linear-gradient(to right,#D4D0C8 0%,#DDDAD3 25%,#F3F2EE 60%,#F5F4F1 100%)"></div>
<div class="a" style="left:928px;top:81px;width:992px;height:18px;background:linear-gradient(to right,#0A246A 0%,#0A246A 6%,#88AADA 100%)"></div>
<svg class="a" style="left:930px;top:82px" width="16" height="16" viewBox="0 0 16 16"><rect x="0.5" y="0.5" width="15" height="15" fill="#6AA458" stroke="#3A7A2C"/><rect x="2" y="2.5" width="12" height="11" fill="#F0F8EC"/><path d="M4 4.5 L12 12 M12 4.5 L4 12" stroke="#2E8A30" stroke-width="2.4"/><path d="M4 4.5 L12 12" stroke="#5CB85C" stroke-width="0.8"/></svg>
<div class="a mono b" style="left:948px;top:84px;font-size:11.67px;line-height:14px;color:#fff;width:290px">Microsoft Excel - 8V03048IA0-预审指示.xls</div>
<div class="a" style="left:1088px;top:101px;width:676px;height:24px;border-radius:2px 6px 6px 2px;background:linear-gradient(to bottom,#F8F7F4 0%,#EDEBE6 50%,#D4D0C8 100%)"></div>
<div class="a" style="left:1753px;top:101px;width:11px;height:24px;border-radius:0 5px 5px 0;background:linear-gradient(to bottom,#9A9A9A,#707070)"></div>
<svg class="a" style="left:1755px;top:112px" width="7" height="9" viewBox="0 0 7 9"><path d="M1 1 L6 1" stroke="#fff" stroke-width="1.4"/><path d="M0.5 4 L6.5 4 L3.5 8 Z" fill="#fff"/><path d="M0 0 L5 0" stroke="#000" stroke-width="1"/><path d="M0 3 L5.5 3 L2.7 6.6 Z" fill="#000"/></svg>
<div class="a" style="left:1091px;top:106px;width:2px;height:2px;background:#9C9A94;box-shadow:1px 1px 0 #fff"></div><div class="a" style="left:1091px;top:110px;width:2px;height:2px;background:#9C9A94;box-shadow:1px 1px 0 #fff"></div><div class="a" style="left:1091px;top:114px;width:2px;height:2px;background:#9C9A94;box-shadow:1px 1px 0 #fff"></div><div class="a" style="left:1091px;top:118px;width:2px;height:2px;background:#9C9A94;box-shadow:1px 1px 0 #fff"></div>
<div class="a" style="left:1096px;top:103px;width:152px;height:19px;background:#fff"></div>
<div class="a" style="left:1236px;top:104px;width:11px;height:17px;background:#E4E2DC"></div>
<svg class="a" style="left:1239px;top:111px" width="5" height="3" viewBox="0 0 5 3"><path d="M0 0 L5 0 L2.5 3 Z" fill="#000"/></svg>
<div class="a" style="left:1099px;top:105px;font-size:12px;line-height:14px">宋体</div>
<div class="a" style="left:1250px;top:103px;width:46px;height:19px;background:#fff"></div>
<div class="a" style="left:1284px;top:104px;width:11px;height:17px;background:#E4E2DC"></div>
<svg class="a" style="left:1287px;top:111px" width="5" height="3" viewBox="0 0 5 3"><path d="M0 0 L5 0 L2.5 3 Z" fill="#000"/></svg>
<div class="a" style="left:1253px;top:105px;font-size:11px;line-height:14px">10</div>
<div class="sep" style="left:1299px;top:105px;height:16px;border-left-color:#A6A6A6"></div>
<div class="a" style="left:1303px;top:102px;width:23px;height:22px;background:#D4D5D8;border:1px solid #0A246A"></div>
<div class="a serif b" style="left:1303px;top:104px;width:23px;text-align:center;font-size:15px;line-height:18px">B</div>
<div class="a serif b" style="left:1326px;top:104px;width:23px;text-align:center;font-size:15px;line-height:18px;font-style:italic">I</div>
<div class="a serif b" style="left:1349px;top:104px;width:23px;text-align:center;font-size:15px;line-height:18px;text-decoration:underline">U</div>
<div class="sep" style="left:1374px;top:105px;height:16px;border-left-color:#A6A6A6"></div>
<svg class="a" style="left:1381px;top:106px" width="15" height="14" viewBox="0 0 15 14"><rect x="0" y="1" width="14" height="1" fill="#000"/><rect x="0" y="3" width="10" height="1" fill="#000"/><rect x="0" y="5" width="14" height="1" fill="#000"/><rect x="0" y="7" width="10" height="1" fill="#000"/><rect x="0" y="9" width="14" height="1" fill="#000"/><rect x="0" y="11" width="10" height="1" fill="#000"/></svg><svg class="a" style="left:1404px;top:106px" width="15" height="14" viewBox="0 0 15 14"><rect x="0.0" y="1" width="14" height="1" fill="#000"/><rect x="2.0" y="3" width="10" height="1" fill="#000"/><rect x="0.0" y="5" width="14" height="1" fill="#000"/><rect x="2.0" y="7" width="10" height="1" fill="#000"/><rect x="0.0" y="9" width="14" height="1" fill="#000"/><rect x="2.0" y="11" width="10" height="1" fill="#000"/></svg><svg class="a" style="left:1427px;top:106px" width="15" height="14" viewBox="0 0 15 14"><rect x="0" y="1" width="14" height="1" fill="#000"/><rect x="4" y="3" width="10" height="1" fill="#000"/><rect x="0" y="5" width="14" height="1" fill="#000"/><rect x="4" y="7" width="10" height="1" fill="#000"/><rect x="0" y="9" width="14" height="1" fill="#000"/><rect x="4" y="11" width="10" height="1" fill="#000"/></svg>
<div class="a" style="left:1447px;top:102px;width:23px;height:22px;background:#D4D5D8;border:1px solid #0A246A"></div>
<svg class="a" style="left:1450px;top:105px" width="17" height="16" viewBox="0 0 17 16"><rect x="0.5" y="0.5" width="16" height="15" fill="#fff" stroke="#7A8AB8"/><g fill="#A8B8E0"><rect x="1.5" y="1.5" width="4" height="2.5"/><rect x="6.5" y="1.5" width="4" height="2.5"/><rect x="11.5" y="1.5" width="4" height="2.5"/><rect x="1.5" y="12" width="4" height="2.5"/><rect x="6.5" y="12" width="4" height="2.5"/><rect x="11.5" y="12" width="4" height="2.5"/></g><path d="M0.5 4.5 L16.5 4.5 M0.5 11.5 L16.5 11.5" stroke="#7A8AB8"/><text x="6" y="11" font-family="Liberation Serif" font-weight="bold" font-size="9" fill="#000">a</text><path d="M1 8 L5 8 M12 8 L16 8" stroke="#203880" stroke-width="1"/><path d="M5.5 8 L3.5 6.5 L3.5 9.5 Z M11.5 8 L13.5 6.5 L13.5 9.5 Z" fill="#203880"/></svg>
<div class="sep" style="left:1472px;top:105px;height:16px;border-left-color:#A6A6A6"></div>
<svg class="a" style="left:1479px;top:104px" width="18" height="18" viewBox="0 0 18 18"><rect x="0.5" y="0.5" width="15" height="9" fill="#4A68B8" stroke="#2A4490"/><ellipse cx="8" cy="5" rx="4" ry="3" fill="#C8D8F0" stroke="#E8F0FC" stroke-width="0.6"/><path d="M6 5 Q8 2.5 10 5 Q8 7.5 6 5" fill="#7A98D0"/><g fill="#F0C040" stroke="#A07810" stroke-width="0.6"><ellipse cx="12" cy="15.5" rx="3.6" ry="1.4"/><ellipse cx="12.5" cy="13.5" rx="3.6" ry="1.4"/><ellipse cx="12.5" cy="11.5" rx="3.6" ry="1.4"/><ellipse cx="12.5" cy="9.5" rx="3.2" ry="1.3"/><ellipse cx="6" cy="13" rx="3" ry="1.1"/></g></svg>
<div class="a" style="left:1503px;top:106px;font-size:13px;line-height:16px">%</div>
<div class="a serif b" style="left:1530px;top:98px;font-size:18px;line-height:20px">,</div>
<svg class="a" style="left:1546px;top:104px" width="20" height="18" viewBox="0 0 20 18"><path d="M1 4 L9 4" stroke="#2858C8" stroke-width="1.4"/><path d="M0.5 4 L4 1.2 L4 6.8 Z" fill="#2858C8"/><text x="9.5" y="8" font-family="Liberation Sans" font-weight="bold" font-size="8.5" fill="#000">.0</text><text x="4" y="16.5" font-family="Liberation Sans" font-weight="bold" font-size="8.5" fill="#000">.00</text></svg>
<svg class="a" style="left:1569px;top:104px" width="20" height="18" viewBox="0 0 20 18"><text x="4" y="8" font-family="Liberation Sans" font-weight="bold" font-size="8.5" fill="#000">.00</text><path d="M0.5 13 L8 13" stroke="#2858C8" stroke-width="1.4"/><path d="M9 13 L5.5 10.2 L5.5 15.8 Z" fill="#2858C8"/><text x="10" y="16.5" font-family="Liberation Sans" font-weight="bold" font-size="8.5" fill="#000">.0</text></svg>
<div class="sep" style="left:1592px;top:105px;height:16px;border-left-color:#A6A6A6"></div>
<svg class="a" style="left:1599px;top:105px" width="17" height="16" viewBox="0 0 17 16"><rect x="4" y="2.0" width="12" height="1.4" fill="#000"/><rect x="7" y="4.6" width="6" height="1.4" fill="#000"/><rect x="4" y="7.2" width="12" height="1.4" fill="#000"/><rect x="7" y="9.8" width="6" height="1.4" fill="#000"/><rect x="4" y="12.4" width="12" height="1.4" fill="#000"/><path d="M6.5 0 L6.5 16" stroke="#000" stroke-width="1" stroke-dasharray="1 1.6"/><path d="M0 7.5 L3.5 4.8 L3.5 10.2 Z" fill="#3868D0"/><path d="M3 7.5 L6 7.5" stroke="#3868D0" stroke-width="1.4"/></svg><svg class="a" style="left:1622px;top:105px" width="17" height="16" viewBox="0 0 17 16"><rect x="4" y="2.0" width="12" height="1.4" fill="#000"/><rect x="7" y="4.6" width="6" height="1.4" fill="#000"/><rect x="4" y="7.2" width="12" height="1.4" fill="#000"/><rect x="7" y="9.8" width="6" height="1.4" fill="#000"/><rect x="4" y="12.4" width="12" height="1.4" fill="#000"/><path d="M6.5 0 L6.5 16" stroke="#000" stroke-width="1" stroke-dasharray="1 1.6"/><path d="M5.5 7.5 L2 4.8 L2 10.2 Z" fill="#3868D0"/><path d="M0 7.5 L3 7.5" stroke="#3868D0" stroke-width="1.4"/></svg>
<div class="sep" style="left:1645px;top:105px;height:16px;border-left-color:#A6A6A6"></div>
<svg class="a" style="left:1654px;top:107px" width="15" height="14" viewBox="0 0 15 14"><g stroke="#909090" stroke-dasharray="1 1.2" fill="none"><path d="M0.5 0.5 L13.5 0.5 M0.5 6.5 L13.5 6.5 M0.5 0.5 L0.5 12 M6.5 0.5 L6.5 12 M12.5 0.5 L12.5 12"/></g><path d="M0 12.7 L13.5 12.7" stroke="#000" stroke-width="1.4"/></svg>
<svg class="a" style="left:1674px;top:112px" width="5" height="3" viewBox="0 0 5 3"><path d="M0 0 L5 0 L2.5 3 Z" fill="#000"/></svg>
<svg class="a" style="left:1686px;top:103px" width="18" height="19" viewBox="0 0 18 19"><path d="M3 8 L8 3.5 L13.5 8.5 L8.5 13 Z" fill="#F4F8FF" stroke="#405080" stroke-width="0.9"/><path d="M5 6.5 L8 4 L12 7.5 L9 8 Z" fill="#C8D8F0"/><path d="M8 6 Q4 0.5 7.5 1.5 Q9 2 8.5 5" fill="none" stroke="#3060C0" stroke-width="1"/><path d="M13.5 8.5 Q16.5 8 16.5 13 Q14 12 13.5 8.5 Z" fill="#3060C0"/><rect x="1" y="15" width="15" height="4" fill="#FFFF00"/></svg>
<svg class="a" style="left:1708px;top:112px" width="5" height="3" viewBox="0 0 5 3"><path d="M0 0 L5 0 L2.5 3 Z" fill="#000"/></svg>
<div class="a serif b" style="left:1720px;top:103px;width:16px;text-align:center;font-size:15px;line-height:16px;color:#2A4A9C">A</div>
<div class="a" style="left:1720px;top:117px;width:16px;height:4px;background:#E80000"></div>
<svg class="a" style="left:1742px;top:112px" width="5" height="3" viewBox="0 0 5 3"><path d="M0 0 L5 0 L2.5 3 Z" fill="#000"/></svg>
<div class="a" style="left:933px;top:130px;width:2px;height:2px;background:#9C9A94;box-shadow:1px 1px 0 #fff"></div><div class="a" style="left:933px;top:134px;width:2px;height:2px;background:#9C9A94;box-shadow:1px 1px 0 #fff"></div><div class="a" style="left:933px;top:138px;width:2px;height:2px;background:#9C9A94;box-shadow:1px 1px 0 #fff"></div><div class="a" style="left:933px;top:142px;width:2px;height:2px;background:#9C9A94;box-shadow:1px 1px 0 #fff"></div>
<svg class="a" style="left:938px;top:129px" width="17" height="17" viewBox="0 0 18 18"><path d="M5 3 L13 3 L16 6 L16 17 L5 17 Z" fill="#E8F0FC" stroke="#6A8AC8" stroke-width="0.9"/><path d="M7 8 L14 8 M7 11 L14 11 M7 14 L14 14 M10 6 L10 16" stroke="#A8C0E8" stroke-width="0.7"/><rect x="0.5" y="0.5" width="10" height="10" fill="#4A9A48" stroke="#2A6A20"/><rect x="2" y="2" width="7" height="7" fill="#E8F4E4"/><path d="M3 3 L8 8 M8 3 L3 8" stroke="#2E8A30" stroke-width="1.8"/></svg>
<div class="menu" style="left:962px;top:131px;width:46px;overflow:hidden">文件(F)</div>
<div class="menu" style="left:1020px;top:131px;width:46px;overflow:hidden">编辑(E)</div>
<div class="menu" style="left:1078px;top:131px;width:46px;overflow:hidden">视图(V)</div>
<div class="menu" style="left:1136px;top:131px;width:46px;overflow:hidden">插入(I)</div>
<div class="menu" style="left:1194px;top:131px;width:46px;overflow:hidden">格式(O)</div>
<div class="menu" style="left:1252px;top:131px;width:46px;overflow:hidden">工具(T)</div>
<div class="menu" style="left:1310px;top:131px;width:46px;overflow:hidden">数据(D)</div>
<div class="menu" style="left:1368px;top:131px;width:46px;overflow:hidden">窗口(W)</div>
<div class="menu" style="left:1426px;top:131px;width:46px;overflow:hidden">帮助(H)</div>
<div class="menu mono" style="left:1484px;top:131px;font-size:11.5px;letter-spacing:-0.9px">Adobe PDF(B)</div>
<div class="a" style="left:930px;top:150px;width:66px;height:25px;border-radius:2px 6px 6px 2px;background:linear-gradient(to bottom,#F8F7F4 0%,#EDEBE6 50%,#D4D0C8 100%)"></div>
<div class="a" style="left:985px;top:150px;width:11px;height:25px;border-radius:0 5px 5px 0;background:linear-gradient(to bottom,#9A9A9A,#707070)"></div>
<svg class="a" style="left:987px;top:162px" width="7" height="9" viewBox="0 0 7 9"><path d="M1 1 L6 1" stroke="#fff" stroke-width="1.4"/><path d="M0.5 4 L6.5 4 L3.5 8 Z" fill="#fff"/><path d="M0 0 L5 0" stroke="#000" stroke-width="1"/><path d="M0 3 L5.5 3 L2.7 6.6 Z" fill="#000"/></svg>
<div class="a" style="left:933px;top:155px;width:2px;height:2px;background:#9C9A94;box-shadow:1px 1px 0 #fff"></div><div class="a" style="left:933px;top:159px;width:2px;height:2px;background:#9C9A94;box-shadow:1px 1px 0 #fff"></div><div class="a" style="left:933px;top:163px;width:2px;height:2px;background:#9C9A94;box-shadow:1px 1px 0 #fff"></div><div class="a" style="left:933px;top:167px;width:2px;height:2px;background:#9C9A94;box-shadow:1px 1px 0 #fff"></div>
<svg class="a" style="left:939px;top:153px" width="18" height="18" viewBox="0 0 18 18"><path d="M3.5 3.5 L12 3.5 L15.5 7 L15.5 16.5 L3.5 16.5 Z" fill="#fff" stroke="#A0A0A0" stroke-width="0.9"/><path d="M12 3.5 L12 7 L15.5 7" fill="#E8E8E8" stroke="#A0A0A0" stroke-width="0.7"/><rect x="0.5" y="2" width="8" height="3.6" fill="#E81010"/><path d="M5 15 Q8.5 9 8.5 6.5 Q8.2 5.5 7.6 6.6 Q7.5 9 11 12 Q14.5 13.5 14 12.3 Q13 11 9 12.3 Q6 13.5 5 15 Z" fill="none" stroke="#D81818" stroke-width="1.1"/></svg><svg class="a" style="left:962px;top:153px" width="18" height="18" viewBox="0 0 18 18"><path d="M3.5 3.5 L12 3.5 L15.5 7 L15.5 16.5 L3.5 16.5 Z" fill="#fff" stroke="#A0A0A0" stroke-width="0.9"/><path d="M12 3.5 L12 7 L15.5 7" fill="#E8E8E8" stroke="#A0A0A0" stroke-width="0.7"/><rect x="0.5" y="2" width="8" height="3.6" fill="#E81010"/><path d="M5 15 Q8.5 9 8.5 6.5 Q8.2 5.5 7.6 6.6 Q7.5 9 11 12 Q14.5 13.5 14 12.3 Q13 11 9 12.3 Q6 13.5 5 15 Z" fill="none" stroke="#D81818" stroke-width="1.1"/><path d="M8.5 0.5 L16 0.5 Q16.8 0.5 16.8 1.3 L16.8 4 Q16.8 4.8 16 4.8 L11.5 4.8 L9.5 6.8 L9.8 4.8 L8.5 4.8 Q7.7 4.8 7.7 4 L7.7 1.3 Q7.7 0.5 8.5 0.5 Z" fill="#F8DC50" stroke="#C09A18" stroke-width="0.7"/></svg>
<div class="a" style="left:930px;top:175px;width:106px;height:20px;background:#fff"></div>
<div class="a mono" style="left:970px;top:177px;font-size:14px;line-height:18px">C13</div>
<svg class="a" style="left:1040px;top:183px" width="7" height="4" viewBox="0 0 7 4"><path d="M0 0 L7 0 L3.5 4 Z" fill="#000"/></svg>
<div class="a serif" style="left:1101px;top:176px;font-size:13px;line-height:18px;font-style:italic;font-weight:bold">f<span style="font-size:9px">x</span></div>
<div class="a" style="left:1116px;top:175px;width:804px;height:20px;background:#fff"></div>
<div class="a" style="left:1127px;top:176px;font-size:16px;line-height:19px">白油块盖器件孔的，请掏开白油块</div>
<div class="a" style="left:928px;top:194px;width:992px;height:599px;background:#fff;border-left:2px solid #505050;border-top:2px solid #505050"></div>
<div class="gl" style="left:1708px;top:215px;width:1px;height:578px"></div>
<div class="gl" style="left:1780px;top:215px;width:1px;height:578px"></div>
<div class="gl" style="left:1852px;top:215px;width:1px;height:578px"></div>
<div class="gl" style="left:1925px;top:215px;width:1px;height:578px"></div>
<div class="gl" style="left:1709px;top:248px;width:220px;height:1px"></div>
<div class="gl" style="left:1709px;top:282px;width:220px;height:1px"></div>
<div class="gl" style="left:1709px;top:316px;width:220px;height:1px"></div>
<div class="gl" style="left:1709px;top:361px;width:220px;height:1px"></div>
<div class="gl" style="left:1709px;top:424px;width:220px;height:1px"></div>
<div class="gl" style="left:1709px;top:456px;width:220px;height:1px"></div>
<div class="gl" style="left:1709px;top:488px;width:220px;height:1px"></div>
<div class="gl" style="left:1709px;top:520px;width:220px;height:1px"></div>
<div class="gl" style="left:1709px;top:552px;width:220px;height:1px"></div>
<div class="gl" style="left:1709px;top:584px;width:220px;height:1px"></div>
<div class="gl" style="left:1709px;top:616px;width:220px;height:1px"></div>
<div class="gl" style="left:1709px;top:648px;width:220px;height:1px"></div>
<div class="gl" style="left:1709px;top:680px;width:220px;height:1px"></div>
<div class="gl" style="left:1709px;top:713px;width:220px;height:1px"></div>
<div class="gl" style="left:1709px;top:746px;width:220px;height:1px"></div>
<div class="gl" style="left:1709px;top:779px;width:220px;height:1px"></div>
<div class="a serif" style="left:930px;top:196px;width:34px;height:19px;background:#D4D0C8;border-right:1px solid #8C8C8C;border-bottom:1px solid #8C8C8C;text-align:center;font-size:16px;line-height:21px"></div>
<div class="a serif" style="left:964px;top:196px;width:58px;height:19px;background:#D4D0C8;border-right:1px solid #8C8C8C;border-bottom:1px solid #8C8C8C;text-align:center;font-size:16px;line-height:21px">A</div>
<div class="a serif" style="left:1022px;top:196px;width:37px;height:19px;background:#D4D0C8;border-right:1px solid #8C8C8C;border-bottom:1px solid #8C8C8C;text-align:center;font-size:16px;line-height:21px">B</div>
<div class="a serif" style="left:1059px;top:196px;width:89px;height:19px;background:#B6BDD2;border-right:1px solid #1C2E6E;border-bottom:1px solid #1C2E6E;text-align:center;font-size:16px;line-height:21px">C</div>
<div class="a serif" style="left:1148px;top:196px;width:61px;height:19px;background:#B6BDD2;border-right:1px solid #1C2E6E;border-bottom:1px solid #1C2E6E;text-align:center;font-size:16px;line-height:21px">D</div>
<div class="a serif" style="left:1209px;top:196px;width:81px;height:19px;background:#B6BDD2;border-right:1px solid #1C2E6E;border-bottom:1px solid #1C2E6E;text-align:center;font-size:16px;line-height:21px">E</div>
<div class="a serif" style="left:1290px;top:196px;width:54px;height:19px;background:#B6BDD2;border-right:1px solid #1C2E6E;border-bottom:1px solid #1C2E6E;text-align:center;font-size:16px;line-height:21px">F</div>
<div class="a serif" style="left:1344px;top:196px;width:49px;height:19px;background:#B6BDD2;border-right:1px solid #1C2E6E;border-bottom:1px solid #1C2E6E;text-align:center;font-size:16px;line-height:21px">G</div>
<div class="a serif" style="left:1393px;top:196px;width:89px;height:19px;background:#B6BDD2;border-right:1px solid #1C2E6E;border-bottom:1px solid #1C2E6E;text-align:center;font-size:16px;line-height:21px">H</div>
<div class="a serif" style="left:1482px;top:196px;width:139px;height:19px;background:#B6BDD2;border-right:1px solid #1C2E6E;border-bottom:1px solid #1C2E6E;text-align:center;font-size:16px;line-height:21px">I</div>
<div class="a serif" style="left:1621px;top:196px;width:88px;height:19px;background:#D4D0C8;border-right:1px solid #8C8C8C;border-bottom:1px solid #8C8C8C;text-align:center;font-size:16px;line-height:21px">J</div>
<div class="a serif" style="left:1709px;top:196px;width:72px;height:19px;background:#D4D0C8;border-right:1px solid #8C8C8C;border-bottom:1px solid #8C8C8C;text-align:center;font-size:16px;line-height:21px">K</div>
<div class="a serif" style="left:1781px;top:196px;width:72px;height:19px;background:#D4D0C8;border-right:1px solid #8C8C8C;border-bottom:1px solid #8C8C8C;text-align:center;font-size:16px;line-height:21px">L</div>
<div class="a serif" style="left:1853px;top:196px;width:73px;height:19px;background:#D4D0C8;border-right:1px solid #8C8C8C;border-bottom:1px solid #8C8C8C;text-align:center;font-size:16px;line-height:21px">M</div>
<div class="a serif" style="left:930px;top:215px;width:34px;height:34px;background:#D4D0C8;border-right:1px solid #8C8C8C;border-bottom:1px solid #8C8C8C"><div class="a" style="left:0;width:34px;top:17px;text-align:center;font-size:16px;line-height:18px">4</div></div>
<div class="a serif" style="left:930px;top:249px;width:34px;height:34px;background:#D4D0C8;border-right:1px solid #8C8C8C;border-bottom:1px solid #8C8C8C"><div class="a" style="left:0;width:34px;top:17px;text-align:center;font-size:16px;line-height:18px">5</div></div>
<div class="a serif" style="left:930px;top:283px;width:34px;height:34px;background:#D4D0C8;border-right:1px solid #8C8C8C;border-bottom:1px solid #8C8C8C"><div class="a" style="left:0;width:34px;top:17px;text-align:center;font-size:16px;line-height:18px">6</div></div>
<div class="a serif" style="left:930px;top:317px;width:34px;height:45px;background:#D4D0C8;border-right:1px solid #8C8C8C;border-bottom:1px solid #8C8C8C"><div class="a" style="left:0;width:34px;top:28px;text-align:center;font-size:16px;line-height:18px">7</div></div>
<div class="a serif" style="left:930px;top:362px;width:34px;height:63px;background:#D4D0C8;border-right:1px solid #8C8C8C;border-bottom:1px solid #8C8C8C"><div class="a" style="left:0;width:34px;top:46px;text-align:center;font-size:16px;line-height:18px">8</div></div>
<div class="a serif" style="left:930px;top:425px;width:34px;height:32px;background:#D4D0C8;border-right:1px solid #8C8C8C;border-bottom:1px solid #8C8C8C"><div class="a" style="left:0;width:34px;top:15px;text-align:center;font-size:16px;line-height:18px">9</div></div>
<div class="a serif" style="left:930px;top:457px;width:34px;height:32px;background:#D4D0C8;border-right:1px solid #8C8C8C;border-bottom:1px solid #8C8C8C"><div class="a" style="left:0;width:34px;top:15px;text-align:center;font-size:16px;line-height:18px">10</div></div>
<div class="a serif" style="left:930px;top:489px;width:34px;height:32px;background:#D4D0C8;border-right:1px solid #8C8C8C;border-bottom:1px solid #8C8C8C"><div class="a" style="left:0;width:34px;top:15px;text-align:center;font-size:16px;line-height:18px">11</div></div>
<div class="a serif" style="left:930px;top:521px;width:34px;height:32px;background:#D4D0C8;border-right:1px solid #8C8C8C;border-bottom:1px solid #8C8C8C"><div class="a" style="left:0;width:34px;top:15px;text-align:center;font-size:16px;line-height:18px">12</div></div>
<div class="a serif" style="left:930px;top:553px;width:34px;height:32px;background:#B6BDD2;border-right:1px solid #1C2E6E;border-bottom:1px solid #1C2E6E"><div class="a" style="left:0;width:34px;top:15px;text-align:center;font-size:16px;line-height:18px">13</div></div>
<div class="a serif" style="left:930px;top:585px;width:34px;height:32px;background:#D4D0C8;border-right:1px solid #8C8C8C;border-bottom:1px solid #8C8C8C"><div class="a" style="left:0;width:34px;top:15px;text-align:center;font-size:16px;line-height:18px">14</div></div>
<div class="a serif" style="left:930px;top:617px;width:34px;height:32px;background:#D4D0C8;border-right:1px solid #8C8C8C;border-bottom:1px solid #8C8C8C"><div class="a" style="left:0;width:34px;top:15px;text-align:center;font-size:16px;line-height:18px">15</div></div>
<div class="a serif" style="left:930px;top:649px;width:34px;height:32px;background:#D4D0C8;border-right:1px solid #8C8C8C;border-bottom:1px solid #8C8C8C"><div class="a" style="left:0;width:34px;top:15px;text-align:center;font-size:16px;line-height:18px">16</div></div>
<div class="a serif" style="left:930px;top:681px;width:34px;height:33px;background:#D4D0C8;border-right:1px solid #8C8C8C;border-bottom:1px solid #8C8C8C"><div class="a" style="left:0;width:34px;top:16px;text-align:center;font-size:16px;line-height:18px">17</div></div>
<div class="a serif" style="left:930px;top:714px;width:34px;height:33px;background:#D4D0C8;border-right:1px solid #8C8C8C;border-bottom:1px solid #8C8C8C"><div class="a" style="left:0;width:34px;top:16px;text-align:center;font-size:16px;line-height:18px">18</div></div>
<div class="a serif" style="left:930px;top:747px;width:34px;height:33px;background:#D4D0C8;border-right:1px solid #8C8C8C;border-bottom:1px solid #8C8C8C"><div class="a" style="left:0;width:34px;top:16px;text-align:center;font-size:16px;line-height:18px">19</div></div>
<div class="a serif" style="left:930px;top:780px;width:34px;height:13px;background:#D4D0C8;border-right:1px solid #8C8C8C;border-bottom:1px solid #8C8C8C"><div class="a" style="left:0;width:34px;top:16px;text-align:center;font-size:16px;line-height:18px">20</div></div>
<div class="yl" style="left:1059px;top:362px;width:561px;height:62px"></div>
<div class="yl" style="left:1059px;top:425px;width:561px;height:31px"></div>
<div class="yl" style="left:1059px;top:457px;width:561px;height:31px"></div>
<div class="yl" style="left:1059px;top:489px;width:561px;height:31px"></div>
<div class="yl" style="left:1059px;top:521px;width:561px;height:31px"></div>
<div class="yl" style="left:1059px;top:553px;width:561px;height:31px"></div>
<div class="yl" style="left:1059px;top:681px;width:561px;height:32px"></div>
<div class="yl" style="left:1059px;top:714px;width:561px;height:32px"></div>
<div class="yl" style="left:1059px;top:747px;width:561px;height:32px"></div>
<div class="yl" style="left:1059px;top:780px;width:561px;height:13px"></div>
<div class="ln" style="left:1021px;top:248px;width:688px;height:1px"></div>
<div class="ln" style="left:1021px;top:282px;width:688px;height:1px"></div>
<div class="ln" style="left:964px;top:316px;width:745px;height:1px"></div>
<div class="ln" style="left:964px;top:361px;width:745px;height:1px"></div>
<div class="ln" style="left:1021px;top:424px;width:688px;height:1px"></div>
<div class="ln" style="left:1021px;top:456px;width:688px;height:1px"></div>
<div class="ln" style="left:1021px;top:488px;width:688px;height:1px"></div>
<div class="ln" style="left:1021px;top:520px;width:688px;height:1px"></div>
<div class="ln" style="left:1021px;top:552px;width:688px;height:1px"></div>
<div class="ln" style="left:1021px;top:584px;width:688px;height:1px"></div>
<div class="ln" style="left:1021px;top:616px;width:688px;height:1px"></div>
<div class="ln" style="left:1021px;top:648px;width:688px;height:1px"></div>
<div class="ln" style="left:964px;top:680px;width:745px;height:1px"></div>
<div class="ln" style="left:1021px;top:713px;width:688px;height:1px"></div>
<div class="ln" style="left:1021px;top:746px;width:688px;height:1px"></div>
<div class="ln" style="left:1021px;top:779px;width:688px;height:1px"></div>
<div class="ln" style="left:1021px;top:215px;width:1px;height:102px"></div>
<div class="ln" style="left:1021px;top:361px;width:1px;height:432px"></div>
<div class="ln" style="left:1058px;top:215px;width:1px;height:578px"></div>
<div class="ln" style="left:1392px;top:215px;width:1px;height:102px"></div>
<div class="ln" style="left:1620px;top:215px;width:1px;height:578px"></div>
<div class="ln" style="left:1708px;top:215px;width:1px;height:578px"></div>
<div class="a" style="left:964px;top:215px;width:57px;height:101px">
<div class="a b" style="left:3px;top:-3px;width:54px;font-size:16px;letter-spacing:1px;line-height:19px;color:#0000D0">待确认</div>
<div class="a b" style="left:3px;top:16px;width:54px;font-size:16px;letter-spacing:1px;line-height:19px;color:#0000D0">光绘时</div>
<div class="a b" style="left:3px;top:35px;width:54px;font-size:16px;letter-spacing:1px;line-height:19px;color:#0000D0">一起确</div>
<div class="a b" style="left:3px;top:54px;width:54px;font-size:16px;letter-spacing:1px;line-height:19px;color:#0000D0">认问题</div>
</div>
<div class="num" style="left:1022px;width:36px;top:224px">1</div>
<div class="num" style="left:1022px;width:36px;top:258px">2</div>
<div class="num" style="left:1022px;width:36px;top:292px">3</div>
<div class="num b" style="left:1022px;width:36px;top:385px">1</div>
<div class="num b" style="left:1022px;width:36px;top:433px">2</div>
<div class="num b" style="left:1022px;width:36px;top:465px">3</div>
<div class="num b" style="left:1022px;width:36px;top:497px">4</div>
<div class="num b" style="left:1022px;width:36px;top:529px">5</div>
<div class="num b" style="left:1022px;width:36px;top:561px">6</div>
<div class="num b" style="left:1022px;width:36px;top:593px">7</div>
<div class="num b" style="left:1022px;width:36px;top:625px">8</div>
<div class="num b" style="left:1022px;width:36px;top:657px">9</div>
<div class="num b" style="left:1022px;width:36px;top:689px">1</div>
<div class="num b" style="left:1022px;width:36px;top:722px">2</div>
<div class="num b" style="left:1022px;width:36px;top:755px">3</div>
<div class="a" style="left:964px;top:320px;width:95px;text-align:center;font-size:16px;letter-spacing:1px;line-height:19px">工艺流程<br>指示</div>
<div class="ct" style="left:1059px;top:331px;width:561px;text-align:center">此板是<b>8V03047VB0</b>的改版，相关工程问题可参考制作</div>
<div class="a" style="left:964px;top:502px;width:57px;text-align:center;font-size:16px;line-height:19px"><span class="mono b" style="font-size:14.5px;letter-spacing:0">CAM</span><br>指示</div>
<div class="a" style="left:964px;top:777px;width:57px;height:16px;text-align:center;font-size:16px;line-height:19px">工序</div>
<div class="ct" style="left:1062px;top:377px">忽略<b>panel</b>层，请<b>cam</b>完全参考<b>8V03047VB0</b>按照<b>2</b>拼版制作</div>
<div class="ct" style="left:1062px;top:432px">丝印不允许上焊盘</div>
<div class="ct" style="left:1062px;top:464px">孔环最小<b>25um</b></div>
<div class="ct" style="left:1062px;top:496px">标记以蚀刻或丝印方式加在底面</div>
<div class="ct" style="left:1062px;top:528px">单面开窗的盘中孔，从盖油面塞孔，不允许有绿油帽</div>
<div class="ct" style="left:1062px;top:560px">白油块盖器件孔的，请掏开白油块</div>
<div class="ct" style="left:1062px;top:592px">客户要求提供标注了尺寸的拼版图<b>.</b></div>
<div class="ct" style="left:1062px;top:689px">层间对位公差<b>+/-75um</b></div>
<div class="ct" style="left:1062px;top:722px">孔位公差<b>+/-75um</b></div>
<div class="ct" style="left:1062px;top:755px">蚀刻公差最大<b>20%</b></div>
<div class="ct" style="left:1062px;top:787px;height:6px;overflow:hidden">外层完成铜厚<b>+/-10um</b></div>
<div class="a" style="left:1057px;top:551px;width:563px;height:34px"><div class="a" style="left:0;top:0;width:572px;height:34px;border:1px solid #1C2E6E;box-shadow:inset 0 0 0 1px #fff, inset 0 0 0 2px #1C2E6E"></div></div>
<div class="a" style="left:1617px;top:581px;width:4px;height:4px;background:#1C2E6E;border-left:1px solid #fff;border-top:1px solid #fff"></div>
<div class="a" style="left:1620px;top:551px;width:59px;height:31px;border:1px solid #000;background:#fff"></div>
<div class="a" style="left:1634px;top:555px;width:27px;height:15px;border:1px solid #E0E4EC;background:#F4F6FA"></div>
<div class="a" style="left:1636px;top:556px;width:23px;height:13px;background:linear-gradient(to bottom,#3A90E0,#A8E0F0 45%,#3A7A80 55%,#3A90D8 70%,#3A88D0)"></div>
<div class="a b" style="left:1628px;top:572px;font-size:7px;line-height:8px;letter-spacing:0">白 寸 . JPg</div>
<div class="a" style="left:1621px;top:552px;width:57px;height:29px;background:repeating-linear-gradient(135deg,transparent 0,transparent 4.4px,#000 4.6px,#000 5.5px,transparent 5.66px)"></div>
<div class="a" style="left:1032px;top:580px;width:342px;height:42px;border:2px solid #E01818;box-shadow:3px 3px 4px rgba(0,0,0,.35), inset 3px 3px 4px rgba(0,0,0,.25)"></div>
<div class="a" style="left:930px;top:793px;width:990px;height:16px;background:#D4D0C8"></div>
<div class="a" style="left:930px;top:793px;width:776px;height:1px;background:#000"></div>
<svg class="a" style="left:933px;top:796px" width="10" height="10" viewBox="0 0 10 10"><path d="M1 1 L1 9" stroke="#000" stroke-width="1.5"/><path d="M8 1 L3 5 L8 9 Z" fill="#000"/></svg>
<svg class="a" style="left:948px;top:796px" width="10" height="10" viewBox="0 0 10 10"><path d="M7 1 L2 5 L7 9 Z" fill="#000"/></svg>
<svg class="a" style="left:963px;top:796px" width="10" height="10" viewBox="0 0 10 10"><path d="M2 1 L7 5 L2 9 Z" fill="#000"/></svg>
<svg class="a" style="left:978px;top:796px" width="10" height="10" viewBox="0 0 10 10"><path d="M8 1 L8 9" stroke="#000" stroke-width="1.5"/><path d="M1 1 L6 5 L1 9 Z" fill="#000"/></svg>
<svg class="a" style="left:990px;top:793px" width="180" height="16" viewBox="0 0 180 16"><path d="M0 0.5 L7.5 14 L52.5 14 L60 0.5 Z" fill="#fff" stroke="#000" stroke-width="1"/><path d="M60 0.5 L52.5 14 L105.5 14 L113 0.5 M113 0.5 L105.5 14 L158 14 L166 0.5" fill="none" stroke="#000"/></svg>
<div class="a mono" style="left:999px;top:794px;font-size:11.67px;line-height:15px;text-decoration:underline">Sheet1</div>
<div class="a mono" style="left:1052px;top:794px;font-size:11.67px;line-height:15px;">Sheet2</div>
<div class="a mono" style="left:1105px;top:794px;font-size:11.67px;line-height:15px;">Sheet3</div>
<div class="a" style="left:1700px;top:794px;width:3px;height:13px;border-left:1px solid #fff;border-right:1px solid #404040;background:#D4D0C8"></div>
<div class="a" style="left:1706px;top:794px;width:15px;height:13px;background:#D4D0C8;border:1px solid;border-color:#fff #404040 #404040 #fff;box-shadow:inset -1px -1px 0 #808080"></div>
<svg class="a" style="left:1710px;top:797px" width="5" height="7" viewBox="0 0 5 7"><path d="M4.5 0 L0.5 3.5 L4.5 7 Z" fill="#000"/></svg>
<div class="a" style="left:1722px;top:794px;width:198px;height:13px;background:#DDDAD4"></div>
<div class="a" style="left:928px;top:807px;width:992px;height:1px;background:#B8B4AC"></div>
<div class="a" style="left:928px;top:808px;width:992px;height:2px;background:#F4F3F0"></div>
<div class="a" style="left:928px;top:810px;width:992px;height:28px;background:linear-gradient(to right,#D4D0C8 0%,#DDDAD3 25%,#F3F2EE 60%,#F5F4F1 100%)"></div>
<div class="a" style="left:930px;top:811px;width:643px;height:26px;border-radius:2px 6px 6px 2px;background:linear-gradient(to bottom,#F8F7F4 0%,#EDEBE6 50%,#D4D0C8 100%)"></div>
<div class="a" style="left:1561px;top:811px;width:12px;height:26px;border-radius:0 5px 5px 0;background:linear-gradient(to bottom,#9A9A9A,#707070)"></div>
<svg class="a" style="left:1564px;top:824px" width="7" height="9" viewBox="0 0 7 9"><path d="M1 1 L6 1" stroke="#fff" stroke-width="1.4"/><path d="M0.5 4 L6.5 4 L3.5 8 Z" fill="#fff"/><path d="M0 0 L5 0" stroke="#000" stroke-width="1"/><path d="M0 3 L5.5 3 L2.7 6.6 Z" fill="#000"/></svg>
<div class="a" style="left:933px;top:816px;width:2px;height:2px;background:#9C9A94;box-shadow:1px 1px 0 #fff"></div><div class="a" style="left:933px;top:820px;width:2px;height:2px;background:#9C9A94;box-shadow:1px 1px 0 #fff"></div><div class="a" style="left:933px;top:824px;width:2px;height:2px;background:#9C9A94;box-shadow:1px 1px 0 #fff"></div><div class="a" style="left:933px;top:828px;width:2px;height:2px;background:#9C9A94;box-shadow:1px 1px 0 #fff"></div>
<div class="menu" style="left:939px;top:817px">绘图(R)</div>
<svg class="a" style="left:985px;top:823px" width="5" height="3" viewBox="0 0 5 3"><path d="M0 0 L5 0 L2.5 3 Z" fill="#000"/></svg>
<svg class="a" style="left:1000px;top:816px" width="11" height="16" viewBox="0 0 11 16"><path d="M1 1 L1 12 L4 9.5 L6.5 15 L8.5 14 L6 8.5 L10 8.5 Z" fill="#fff" stroke="#5070B0" stroke-width="1"/></svg>
<div class="sep" style="left:1019px;top:816px;height:16px;border-left-color:#A6A6A6"></div>
<div class="menu" style="left:1027px;top:817px">自选图形(U)</div>
<svg class="a" style="left:1096px;top:823px" width="5" height="3" viewBox="0 0 5 3"><path d="M0 0 L5 0 L2.5 3 Z" fill="#000"/></svg>
<svg class="a" style="left:1110px;top:817px" width="14" height="14" viewBox="0 0 14 14"><path d="M1 1 L12 12" stroke="#000" stroke-width="1"/></svg>
<svg class="a" style="left:1133px;top:817px" width="14" height="14" viewBox="0 0 14 14"><path d="M1 1 L10 10" stroke="#000" stroke-width="1"/><path d="M12 12 L6 10 L10 6 Z" fill="#000"/></svg>
<div class="a" style="left:1155px;top:819px;width:16px;height:11px;border:1px solid #000"></div>
<div class="a" style="left:1178px;top:819px;width:16px;height:11px;border:1px solid #000;border-radius:50%"></div>
<div class="a" style="left:1201px;top:817px;width:15px;height:14px;background:#F4F8FF;border:1px solid #5080C0"></div><div class="a" style="left:1204px;top:820px;font-size:7px;line-height:8px;font-weight:bold">A≡</div>
<div class="a" style="left:1224px;top:817px;width:15px;height:14px;background:#F4F8FF;border:1px solid #5080C0"></div><div class="a" style="left:1226px;top:820px;font-size:7px;line-height:8px;font-weight:bold">‖A</div>
<div class="a serif b" style="left:1246px;top:812px;font-size:21px;line-height:24px;font-style:italic;color:#3060C0;text-shadow:-1px 1px 0 #183080">A</div>
<svg class="a" style="left:1269px;top:816px" width="16" height="16" viewBox="0 0 16 16"><circle cx="8" cy="8" r="5.5" fill="none" stroke="#606060" stroke-dasharray="2 1.5"/><circle cx="8" cy="2" r="1.6" fill="#D04040"/><circle cx="13.5" cy="10" r="1.6" fill="#4060D0"/><circle cx="3" cy="11" r="1.6" fill="#40A040"/><circle cx="8" cy="14" r="1.4" fill="#4060D0"/></svg>
<div class="a" style="left:1293px;top:817px;width:15px;height:14px;background:#E8ECF8;border:1px solid #203880"></div><svg class="a" style="left:1296px;top:819px" width="10" height="11" viewBox="0 0 10 11"><circle cx="5" cy="3.5" r="2.6" fill="#C08050"/><path d="M0.5 11 Q5 4 9.5 11 Z" fill="#D06030"/></svg>
<div class="a" style="left:1316px;top:817px;width:15px;height:14px;background:#E8ECF8;border:1px solid #5080C0"></div><svg class="a" style="left:1318px;top:819px" width="12" height="11" viewBox="0 0 12 11"><circle cx="8.5" cy="3" r="1.8" fill="#E0A030"/><path d="M0 11 L5 4 L8 8 L10 6.5 L12 11 Z" fill="#7088A8"/></svg>
<div class="sep" style="left:1337px;top:816px;height:16px;border-left-color:#A6A6A6"></div>
<svg class="a" style="left:1344px;top:814px" width="18" height="19" viewBox="0 0 18 19"><path d="M3 8 L8 3.5 L13.5 8.5 L8.5 13 Z" fill="#F4F8FF" stroke="#405080" stroke-width="0.9"/><path d="M5 6.5 L8 4 L12 7.5 L9 8 Z" fill="#C8D8F0"/><path d="M8 6 Q4 0.5 7.5 1.5 Q9 2 8.5 5" fill="none" stroke="#3060C0" stroke-width="1"/><path d="M13.5 8.5 Q16.5 8 16.5 13 Q14 12 13.5 8.5 Z" fill="#3060C0"/><rect x="1" y="15" width="15" height="4" fill="#FFFF00"/></svg>
<svg class="a" style="left:1366px;top:823px" width="5" height="3" viewBox="0 0 5 3"><path d="M0 0 L5 0 L2.5 3 Z" fill="#000"/></svg>
<svg class="a" style="left:1378px;top:814px" width="18" height="19" viewBox="0 0 18 19"><path d="M3 11 L12 2 L15 5 L7 12 Z" fill="#E8C070" stroke="#806020" stroke-width="0.8"/><path d="M3 11 L7 12 L2 14 Z" fill="#404040"/><rect x="1" y="14" width="15" height="4" fill="#1030E0"/></svg>
<svg class="a" style="left:1400px;top:823px" width="5" height="3" viewBox="0 0 5 3"><path d="M0 0 L5 0 L2.5 3 Z" fill="#000"/></svg>
<div class="a serif b" style="left:1412px;top:814px;width:16px;text-align:center;font-size:15px;line-height:16px;color:#2A4A9C">A</div>
<div class="a" style="left:1412px;top:828px;width:16px;height:4px;background:#E80000"></div>
<svg class="a" style="left:1434px;top:823px" width="5" height="3" viewBox="0 0 5 3"><path d="M0 0 L5 0 L2.5 3 Z" fill="#000"/></svg>
<svg class="a" style="left:1446px;top:817px" width="16" height="14" viewBox="0 0 16 14"><rect x="0" y="1" width="16" height="1" fill="#000"/><rect x="0" y="4" width="16" height="2" fill="#000"/><rect x="0" y="8" width="16" height="3" fill="#000"/></svg>
<svg class="a" style="left:1469px;top:817px" width="16" height="14" viewBox="0 0 16 14"><path d="M0 2.5 L16 2.5" stroke="#000" stroke-dasharray="1 1"/><path d="M0 6.5 L16 6.5" stroke="#000" stroke-dasharray="2 1"/><path d="M0 10.5 L16 10.5" stroke="#000" stroke-dasharray="3 1.5"/></svg>
<svg class="a" style="left:1492px;top:816px" width="16" height="16" viewBox="0 0 16 16"><path d="M1 3 L14 3 M1 8 L15 8 M2 13 L15 13" stroke="#000"/><path d="M15 3 L11 0.5 L11 5.5 Z M0 8 L4 5.5 L4 10.5 Z M15 8 L11 5.5 L11 10.5 Z M0 13 L4 10.5 L4 15.5 Z" fill="#000"/></svg>
<div class="a" style="left:1517px;top:817px;width:11px;height:11px;background:linear-gradient(135deg,#A8D4A8,#5CA05C);border:1px solid #4A8A4A;box-shadow:2px 2px 1px #A0A0A0"></div>
<svg class="a" style="left:1539px;top:816px" width="16" height="16" viewBox="0 0 16 16"><path d="M1 5 L5 1.5 L15 1.5 L11 5 Z" fill="#B8DCB8" stroke="#4A8A4A" stroke-width="0.8"/><path d="M11 5 L15 1.5 L15 11 L11 14.5 Z" fill="#5A9A5A" stroke="#4A8A4A" stroke-width="0.8"/><rect x="1" y="5" width="10" height="9.5" fill="#8CC48C" stroke="#4A8A4A" stroke-width="0.8"/></svg>
<div class="a" style="left:928px;top:838px;width:992px;height:19px;background:#D4D0C8"></div>
<div class="menu" style="left:938px;top:841px">就绪</div>
<div class="a" style="left:1836px;top:840px;width:34px;height:14px;border:1px solid;border-color:#C4C0B8 #E8E6E0 #E8E6E0 #C4C0B8"></div>
<div class="a" style="left:1874px;top:840px;width:34px;height:14px;border:1px solid;border-color:#C4C0B8 #E8E6E0 #E8E6E0 #C4C0B8"></div>
<div class="a" style="left:1901px;top:817px;width:46px;height:46px;border-radius:50%;background:radial-gradient(circle at 45% 30%,#5CDC6C,#34B848 60%,#289838);border:2px solid #E8F4EC;box-shadow:0 0 2px #208040,3px 4px 6px rgba(0,0,0,.3)"></div>
<div class="a b" style="left:1907px;top:834px;font-size:13px;line-height:14px;color:#fff">55</div>
<div class="a" style="left:0;top:1005px;width:1920px;height:23px;background:#D4D0C8;border-top:1px solid #D4D0C8"><div class="a" style="left:0;top:0;width:1920px;height:1px;background:#fff"></div></div>
<div class="tb" style="left:2px;width:47px"></div>
<svg class="a" style="left:5px;top:1010px" width="16" height="16" viewBox="0 0 16 16"><path d="M1 3 Q4 1 7 3 L6 8 Q3 6 0 8 Z" fill="#E85020"/><path d="M8 3.5 Q11 5.5 14.5 3.5 L13.5 8.5 Q10 10.5 7 8.5 Z" fill="#5CB830"/><path d="M0 9 Q3 7 6 9 L5 14 Q2 12 -1 14 Z" fill="#3A78E0"/><path d="M7 9.5 Q10 11.5 13.5 9.5 L12.5 14.5 Q9 16.5 6 14.5 Z" fill="#F0B820"/></svg>
<div class="a" style="left:22px;top:1011px;font-size:12px;line-height:15px;width:26px">开始</div>
<div class="sep" style="left:57px;top:1010px;height:18px"></div>
<svg class="a" style="left:75px;top:1011px" width="16" height="16" viewBox="0 0 16 16"><rect x="0.5" y="0.5" width="15" height="15" fill="#B0A8B0" stroke="#E07070"/><circle cx="8" cy="8" r="6.5" fill="#1828B0"/><path d="M6 3 Q9 2 9 5 Q8 7 9 9 Q8 12 7 10 Q6 8 5 7 Q4 5 6 3 Z" fill="#C0B040"/></svg><svg class="a" style="left:266px;top:1011px" width="16" height="16" viewBox="0 0 16 16"><rect x="0.5" y="0.5" width="15" height="15" fill="#B0A8B0" stroke="#E07070"/><circle cx="8" cy="8" r="6.5" fill="#1828B0"/><path d="M6 3 Q9 2 9 5 Q8 7 9 9 Q8 12 7 10 Q6 8 5 7 Q4 5 6 3 Z" fill="#C0B040"/></svg>
<div class="tb" style="left:101px;width:155px"><svg class="a" style="left:4px;top:1px" width="16" height="16" viewBox="0 0 16 16"><path d="M13 3 Q7 0 3 4 Q0 8 3 12 Q7 16 12 13 L13 8 L8 8 L8 10.5 L10 10.5 Q7 12.5 5 10 Q3.5 7 6 5 Q9 3.5 12 6 Z" fill="#E03018"/><path d="M11 1 L14 0 L13 4 Z" fill="#E03018"/></svg><span>Foxmail</span></div>
<div class="tb" style="left:292px;width:154px"><svg class="a" style="left:3px;top:1px" width="16" height="16" viewBox="0 0 16 16"><rect x="0.5" y="0.5" width="15" height="15" rx="1" fill="#2C4FD0" stroke="#0A1E8C"/><rect x="3" y="1" width="9" height="5" fill="#fff"/><rect x="9" y="1.5" width="2" height="3.5" fill="#2C4FD0"/><rect x="2" y="8" width="12" height="7" fill="#fff"/><rect x="3" y="9.5" width="10" height="1.6" fill="#E03030"/><rect x="3" y="12.3" width="10" height="1.6" fill="#E03030"/></svg><span>Total Commander 7....</span></div>
<div class="tb" style="left:449px;width:154px"><svg class="a" style="left:5px;top:1px" width="13" height="16" viewBox="0 0 13 16"><rect x="0.6" y="0.6" width="11.8" height="14.8" rx="1" fill="#D8ECFC" stroke="#4A90D8" stroke-width="1.2"/><rect x="2.5" y="2.5" width="8" height="3" fill="#F4F8FC" stroke="#F0C060" stroke-width="0.6"/><g fill="#4A90D8"><rect x="2.5" y="7.5" width="2" height="1.5"/><rect x="5.5" y="7.5" width="2" height="1.5"/><rect x="8.5" y="7.5" width="2" height="1.5"/><rect x="2.5" y="10" width="2" height="1.5"/><rect x="5.5" y="10" width="2" height="1.5"/><rect x="8.5" y="10" width="2" height="1.5"/><rect x="2.5" y="12.5" width="2" height="1.5"/><rect x="5.5" y="12.5" width="2" height="1.5"/><rect x="8.5" y="12.5" width="2" height="1.5"/></g></svg><span style="font-family:K,'Liberation Sans',sans-serif;font-size:12px;letter-spacing:0">计算器</span></div>
<div class="tb" style="left:605px;width:154px"><svg class="a" style="left:3px;top:1px" width="17" height="16" viewBox="0 0 17 16"><path d="M8.5 0.5 L10.8 5.5 L16.3 6 L12.2 9.8 L13.4 15.2 L8.5 12.4 L3.6 15.2 L4.8 9.8 L0.7 6 L6.2 5.5 Z" fill="#F09020" stroke="#D06010" stroke-width="0.8"/><circle cx="8.5" cy="8.5" r="2.5" fill="#F8D060"/></svg><span style="font-family:K,'Liberation Sans',sans-serif;font-size:12px;letter-spacing:0">兴森快捷衡阳分公司...</span></div>
<div class="tb" style="left:761px;width:154px"><svg class="a" style="left:3px;top:1px" width="17" height="17" viewBox="0 0 17 17"><circle cx="9" cy="9.5" r="7" fill="#38A8C8" stroke="#186888"/><circle cx="9" cy="9.5" r="4" fill="#58C868"/><circle cx="9" cy="9.5" r="1.8" fill="#F0E040"/><path d="M1 4 Q4 0 9 1" stroke="#3060C0" stroke-width="1.6" fill="none"/></svg><span>Genesis</span></div>
<div class="tb" style="left:917px;width:154px"><svg class="a" style="left:3px;top:1px" width="16" height="16" viewBox="0 0 16 16"><rect x="0.5" y="0.5" width="15" height="15" fill="#fff" stroke="#202020"/><rect x="1" y="1" width="14" height="2.5" fill="#182890"/><path d="M4 6 L12 13.5 M12 6 L4 13.5" stroke="#C8C820" stroke-width="2.4"/><path d="M4 6 L12 13.5" stroke="#E8E860" stroke-width="1"/></svg><span>Engineering Toolki...</span></div>
<div class="tb" style="left:1073px;width:153px"><svg class="a" style="left:3px;top:1px" width="16" height="16" viewBox="0 0 16 16"><rect x="0.5" y="0.5" width="15" height="15" fill="#fff" stroke="#202020"/><rect x="1" y="1" width="14" height="2.5" fill="#182890"/><path d="M4 6 L12 13.5 M12 6 L4 13.5" stroke="#C8C820" stroke-width="2.4"/><path d="M4 6 L12 13.5" stroke="#E8E860" stroke-width="1"/></svg><span>Progress</span></div>
<div class="tb" style="left:1228px;width:152px"><svg class="a" style="left:3px;top:1px" width="16" height="16" viewBox="0 0 16 16"><rect x="0.5" y="0.5" width="15" height="15" fill="#fff" stroke="#202020"/><rect x="1" y="1" width="14" height="2.5" fill="#182890"/><path d="M4 6 L12 13.5 M12 6 L4 13.5" stroke="#C8C820" stroke-width="2.4"/><path d="M4 6 L12 13.5" stroke="#E8E860" stroke-width="1"/></svg><span>Graphic Editor 9.0...</span></div>
<div class="tb" style="left:1382px;width:153px"><svg class="a" style="left:3px;top:1px" width="16" height="16" viewBox="0 0 16 16"><rect x="0.5" y="0.5" width="15" height="15" fill="#fff" stroke="#202020"/><rect x="1" y="1" width="14" height="2.5" fill="#182890"/><path d="M4 6 L12 13.5 M12 6 L4 13.5" stroke="#C8C820" stroke-width="2.4"/><path d="M4 6 L12 13.5" stroke="#E8E860" stroke-width="1"/></svg><span>Graphic Editor 9.0...</span></div>
<div class="tb" style="left:1537px;width:153px"><svg class="a" style="left:4px;top:1px" width="15" height="17" viewBox="0 0 15 17"><path d="M5 1 L12 1 Q15 1 14.5 5 Q14 9 9 9 L6.5 9 L5 16 L1 16 L3.5 4 Q4 1 5 1 Z" fill="#30A848"/><path d="M7 4 L10.5 4 Q11.5 4 11 5.5 Q10.5 7 9 7 L6.5 7 Z" fill="#D4D0C8"/></svg><span style="font-family:K,'Liberation Sans',sans-serif;font-size:12px;letter-spacing:0">工程系统<i style="display:inline-block;width:18px"></i>版本:<i style="display:inline-block;width:6px"></i>1...</span></div>
<div class="sep" style="left:1700px;top:1010px;height:18px"></div>
<svg class="a" style="left:1711px;top:1012px" width="17" height="14" viewBox="0 0 17 14"><path d="M8 4 Q8 1 12 0.5" stroke="#909090" fill="none"/><rect x="0.6" y="4.6" width="15.8" height="8.8" rx="1.5" fill="#E8E8E8" stroke="#909090" stroke-width="1.2"/><path d="M3 7 L14 7 M3 9 L14 9 M4 11.2 L13 11.2" stroke="#909090" stroke-dasharray="1.5 1"/></svg>
<div class="sep" style="left:1731px;top:1010px;height:18px"></div>
<div class="a" style="left:1736px;top:1008px;width:182px;height:22px;border:1px solid;border-color:#808080 #fff #fff #808080"></div>
<svg class="a" style="left:1742px;top:1011px" width="18" height="16" viewBox="0 0 18 16"><path d="M1 15 L10 3 L11 9 Z" fill="#E02020"/><path d="M11 9 L17 15 L12 13 Z" fill="#30B030"/></svg>
<svg class="a" style="left:1767px;top:1010px" width="15" height="17" viewBox="0 0 15 17"><path d="M7.5 0.5 L14 3 Q14 12 7.5 16.5 Q1 12 1 3 Z" fill="#58B838" stroke="#F0F0F0" stroke-width="1.2"/><path d="M8.5 4 L5 9 L7.5 9 L6.5 13 L10 8 L7.5 8 Z" fill="#fff"/></svg>
<svg class="a" style="left:1790px;top:1010px" width="18" height="18" viewBox="0 0 18 18"><circle cx="9" cy="9" r="8" fill="#F0E020" stroke="#80B020" stroke-width="1.6"/><path d="M9 4.5 L9 13.5 M4.5 9 L13.5 9" stroke="#208020" stroke-width="2.4"/></svg>
<svg class="a" style="left:1815px;top:1009px" width="18" height="18" viewBox="0 0 18 18"><path d="M13 4 Q7 1 3 5 Q0 9 3 13 Q6 16 10 14.5 L10 9 L7 9 L7 11 Q5 10 5.5 8 Q7 5 12 7 Z" fill="#E03018"/><path d="M11 2 L14.5 0.5 L13.5 4.5 Z" fill="#E03018"/><rect x="8.5" y="11.5" width="9" height="6" fill="#FCE8B0" stroke="#D09020" stroke-width="0.8"/><path d="M8.5 11.5 L13 15 L17.5 11.5" stroke="#D09020" stroke-width="0.8" fill="none"/></svg>
<div class="a mono" style="left:1853px;top:1016px;font-size:11.5px;letter-spacing:-0.9px;line-height:14px">16:38</div>
</body></html>
